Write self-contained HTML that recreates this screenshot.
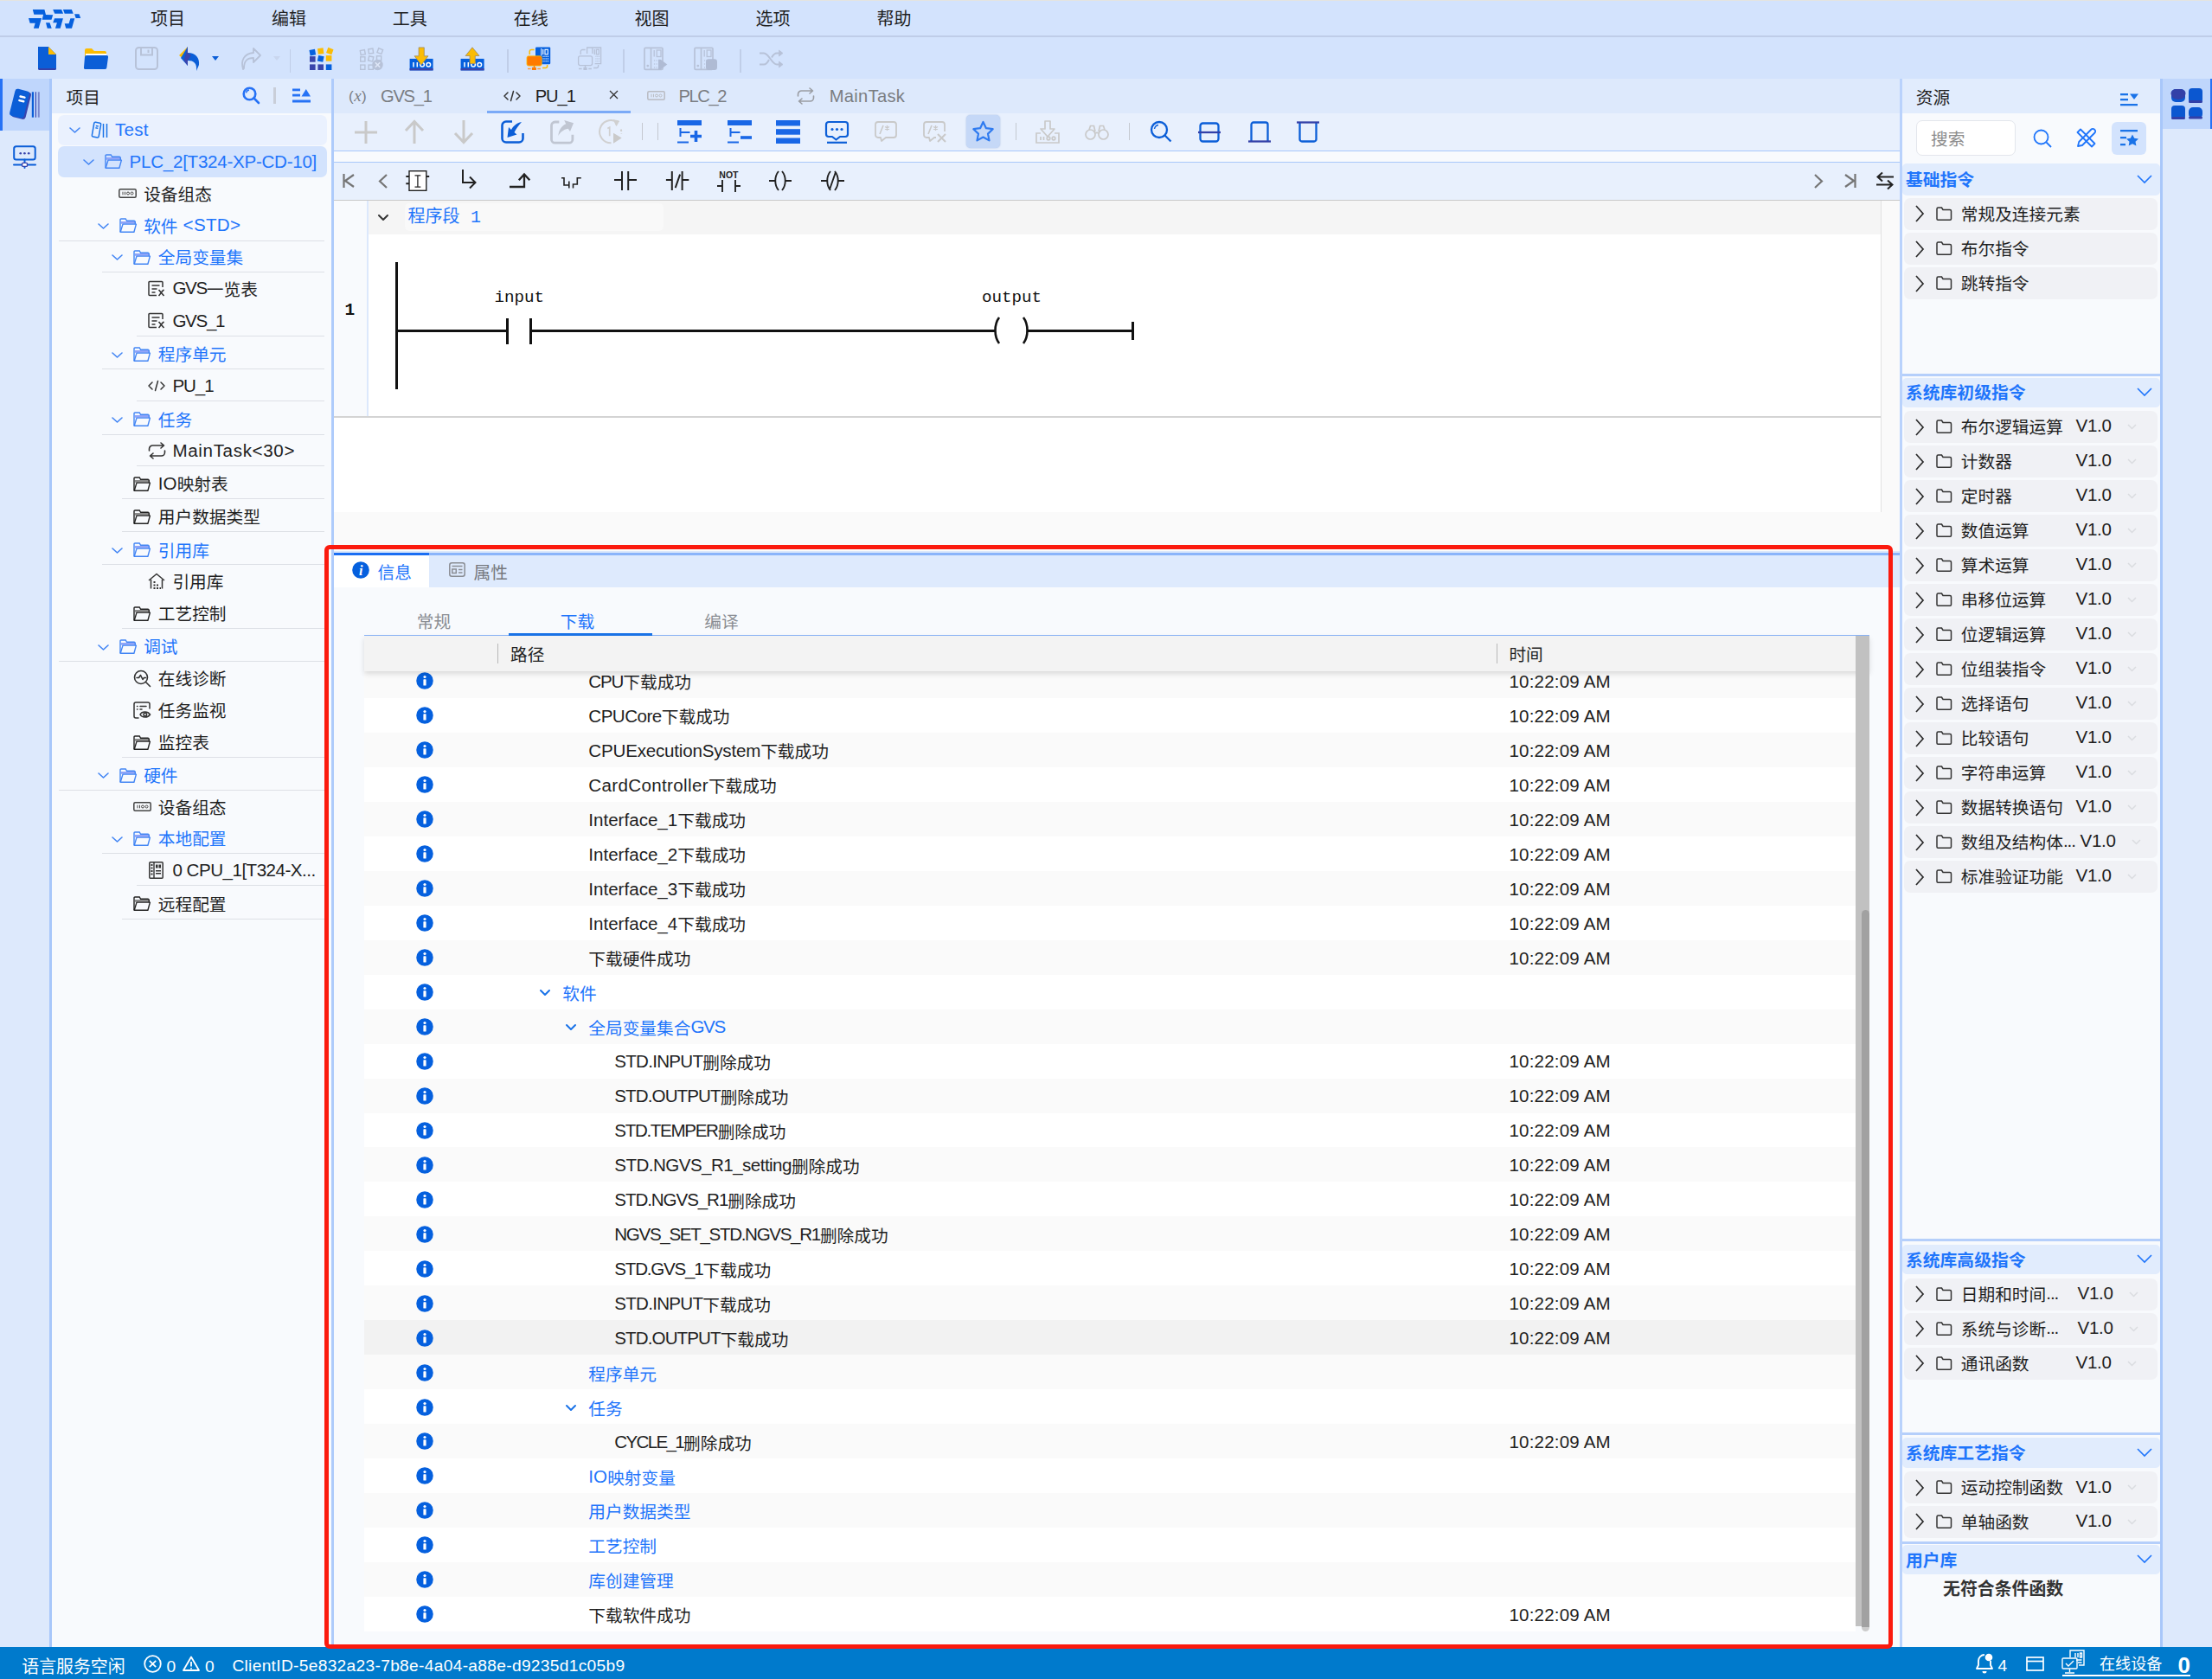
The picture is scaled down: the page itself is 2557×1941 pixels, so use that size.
<!DOCTYPE html><html lang="zh"><head><meta charset="utf-8"><title>IDE</title><style>html,body{margin:0;padding:0}body{width:2557px;height:1941px;overflow:hidden;position:relative;background:#f8fafd;font-family:"Liberation Sans","Noto Sans CJK SC",sans-serif}
body>div,body>svg{position:absolute}.t{white-space:nowrap}.l{position:relative;top:-1.6px}svg{overflow:visible}</style></head><body>
<div style="left:0px;top:0px;width:2557px;height:91px;background:#d3e3fd;"></div>
<div style="left:0px;top:41px;width:2557px;height:2px;background:#bfcde8;"></div>
<div style="left:0px;top:0px;width:2557px;height:1px;background:#e4e4e0;"></div>
<div style="left:0px;top:91px;width:57px;height:1813px;background:#dde9fc;"></div>
<div style="left:0px;top:91px;width:57px;height:59.5px;background:#bfd6fc;"></div>
<div style="left:0px;top:91px;width:3px;height:59.5px;background:#2672f5;"></div>
<div style="left:57px;top:91px;width:3px;height:1813px;background:#a8c7fa;"></div>
<div style="left:60px;top:91px;width:323px;height:1813px;background:#f8fafd;"></div>
<div style="left:60px;top:91px;width:323px;height:40px;background:#e1ecfd;"></div>
<div style="left:383px;top:91px;width:3px;height:1813px;background:#aecbfb;"></div>
<div style="left:386px;top:91px;width:1810px;height:40px;background:#dde9fc;"></div>
<div style="left:386px;top:131px;width:1810px;height:43px;background:#e8f0fd;"></div>
<div style="left:386px;top:174px;width:1810px;height:1px;background:#a8c7fa;"></div>
<div style="left:386px;top:175px;width:1810px;height:12px;background:#f8fafd;"></div>
<div style="left:386px;top:187px;width:1810px;height:1px;background:#a8c7fa;"></div>
<div style="left:386px;top:188px;width:1810px;height:43px;background:#e8f0fd;"></div>
<div style="left:386px;top:231px;width:1810px;height:1px;background:#c9c9c9;"></div>
<div style="left:386px;top:232px;width:1810px;height:406px;background:#fafafa;"></div>
<div style="left:386px;top:232px;width:1788px;height:360px;background:#fff;"></div>
<div style="left:386px;top:232px;width:38px;height:250px;background:#f8fafd;"></div>
<div style="left:424px;top:232px;width:2px;height:250px;background:#dce8fc;"></div>
<div style="left:426px;top:232px;width:1748px;height:39px;background:#f5f5f5;"></div>
<div style="left:468px;top:235px;width:299px;height:32px;background:#f9f9f9;border-radius:5px;"></div>
<div style="left:386px;top:481px;width:1788px;height:2px;background:#d4d4d4;"></div>
<div style="left:2174px;top:232px;width:1px;height:360px;background:#e2e2e2;"></div>
<div style="left:386px;top:642px;width:1810px;height:37px;background:#deeafd;"></div>
<div style="left:386px;top:637px;width:1810px;height:2px;background:#dbe8fb;"></div>
<div style="left:386px;top:639px;width:1810px;height:3px;background:#8ab4fa;"></div>
<div style="left:386px;top:642px;width:110px;height:37px;background:#fff;"></div>
<div style="left:386px;top:639px;width:110px;height:3px;background:#1b6ef3;"></div>
<div style="left:386px;top:679px;width:1810px;height:1225px;background:#f8fafd;"></div>
<div style="left:2196px;top:91px;width:3px;height:1813px;background:#b9d2fc;"></div>
<div style="left:2199px;top:91px;width:298px;height:1813px;background:#f8fafd;"></div>
<div style="left:2199px;top:91px;width:298px;height:40px;background:#e1ecfd;"></div>
<div style="left:2497px;top:91px;width:3px;height:1813px;background:#a8c7fa;"></div>
<div style="left:2500px;top:91px;width:57px;height:1813px;background:#dde9fc;"></div>
<div style="left:2500px;top:91px;width:57px;height:58px;background:#bfd6fc;"></div>
<div style="left:2555px;top:91px;width:2px;height:58px;background:#2672f5;"></div>
<div style="left:0px;top:1904px;width:2557px;height:37px;background:#007acc;"></div>
<svg style="left:0.0px;top:0.0px;" width="120" height="42" viewBox="0 0 120 42"><path d="M37.8 11.0 L51.4 11.0 L53.0 16.9 L61.2 17.2 L59.5 22.7 L48.7 22.7 L50.1 16.8 L39.3 16.8ZM33.0 21.1 L48.0 21.1 L44.7 32.8 L38.9 32.8 L40.7 26.7 L34.6 26.7ZM53.0 26.2 L57.5 26.2 L59.7 32.8 L54.7 32.8ZM61.2 11.1 L71.1 11.1 L73.1 15.7 L63.2 15.7ZM63.0 21.3 L72.9 21.3 L69.7 32.8 L63.9 32.8 L65.9 26.2 L61.2 26.2ZM72.9 11.1 L82.9 11.1 L84.7 15.7 L74.7 15.7ZM81.4 21.3 L86.3 21.3 L83.0 32.8 L76.2 32.8 L74.7 27.2 L79.6 27.2ZM86.1 16.2 L91.5 16.2 L93.2 20.9 L87.7 20.9Z" fill="#0560de"/></svg>
<div class="t" style="left:-206.0px;width:800px;text-align:center;top:6.5px;line-height:30px;font-size:20px;color:#1f1f1f;">项目</div>
<div class="t" style="left:-66.10000000000002px;width:800px;text-align:center;top:6.5px;line-height:30px;font-size:20px;color:#1f1f1f;">编辑</div>
<div class="t" style="left:73.80000000000001px;width:800px;text-align:center;top:6.5px;line-height:30px;font-size:20px;color:#1f1f1f;">工具</div>
<div class="t" style="left:213.70000000000005px;width:800px;text-align:center;top:6.5px;line-height:30px;font-size:20px;color:#1f1f1f;">在线</div>
<div class="t" style="left:353.6px;width:800px;text-align:center;top:6.5px;line-height:30px;font-size:20px;color:#1f1f1f;">视图</div>
<div class="t" style="left:493.5px;width:800px;text-align:center;top:6.5px;line-height:30px;font-size:20px;color:#1f1f1f;">选项</div>
<div class="t" style="left:633.4000000000001px;width:800px;text-align:center;top:6.5px;line-height:30px;font-size:20px;color:#1f1f1f;">帮助</div>
<svg style="left:42.5px;top:54.0px;" width="22" height="27" viewBox="0 0 22 27"><path d="M1 0H13L22 9V25a2 2 0 0 1-2 2H3a2 2 0 0 1-2-2Z" fill="#0b5ed7"/><path d="M13 0L22 9H13Z" fill="#fbbc04"/><path d="M1 25h21v0a2 2 0 0 1-2 2H3a2 2 0 0 1-2-2Z" fill="#3340a8"/></svg>
<svg style="left:97.4px;top:56.0px;" width="28" height="24" viewBox="0 0 28 24"><path d="M1 2a2 2 0 0 1 2-2h6l3 3h12a2 2 0 0 1 2 2v6H1Z" fill="#fbbc04"/><path d="M2 6h24v3H2Z" fill="#fff"/><path d="M3 8h23a2 2 0 0 1 2 2.3l-1.6 11.7a2 2 0 0 1-2 2H2a2 2 0 0 1-2-2.3L1 10a2 2 0 0 1 2-2Z" fill="#0b5ed7"/></svg>
<svg style="left:156.0px;top:54.0px;" width="27" height="27" viewBox="0 0 27 27"><rect x="1" y="1" width="25" height="25" rx="3.5" fill="none" stroke="#b7c2d8" stroke-width="2"/><path d="M7 1v8.5h13V1" fill="none" stroke="#b7c2d8" stroke-width="2"/><path d="M15.5 3.5v3.5" stroke="#b7c2d8" stroke-width="2"/></svg>
<svg style="left:206.0px;top:53.5px;" width="26" height="28" viewBox="0 0 26 28"><path d="M11 0L1 10l6 5Z" fill="#fbbc04"/><path d="M11 0v7c9 0 14 6 13 14l-3 7c1-9-3-12-10-12v6L3 13Z" fill="#0b5ed7"/><path d="M11 0v7l4 3-4 6v6L6.5 16Z" fill="#3945ad"/></svg>
<svg style="left:245.4px;top:65.0px;" width="8" height="5" viewBox="0 0 8 5"><path d="M0 0h8L4 5Z" fill="#0b5ed7"/></svg>
<svg style="left:278.0px;top:55.0px;" width="24" height="26" viewBox="0 0 24 26"><path d="M15 1l8 8-8 8v-5c-7 0-11 3-11 12l-1 1c-3-10 1-18 12-19Z" fill="none" stroke="#b7c2d8" stroke-width="1.8" stroke-linejoin="round"/></svg>
<svg style="left:316.0px;top:65.0px;" width="8" height="5" viewBox="0 0 8 5"><path d="M0 0h8L4 5Z" fill="#c9d6ee"/></svg>
<div style="left:334.5px;top:57px;width:1.5px;height:27px;background:#c0cee8;"></div>
<svg style="left:358.0px;top:54.0px;" width="27" height="27" viewBox="0 0 27 27"><rect x="0.0" y="3.3" width="6.6" height="6.6" fill="#0560de" transform="rotate(-10 3.3 6.6)"/><rect x="9.4" y="1.8" width="6.6" height="6.6" fill="#fbbc04" transform="rotate(-8 12.7 5.1)"/><rect x="20.0" y="1.8" width="6.6" height="6.6" fill="#fbbc04" transform="rotate(20 23.3 5.1)"/><rect x="0.0" y="11.1" width="6.6" height="6.6" fill="#3944ab" transform="rotate(0 3.3 14.4)"/><rect x="9.4" y="10.6" width="6.6" height="6.6" fill="#0560de" transform="rotate(12 12.7 13.9)"/><rect x="18.8" y="10.1" width="6.6" height="6.6" fill="#fbbc04" transform="rotate(0 22.1 13.4)"/><rect x="0.0" y="20.4" width="6.6" height="6.6" fill="#3944ab" transform="rotate(0 3.3 23.7)"/><rect x="9.4" y="20.4" width="6.6" height="6.6" fill="#3944ab" transform="rotate(0 12.7 23.7)"/><rect x="18.8" y="20.4" width="6.6" height="6.6" fill="#0560de" transform="rotate(0 22.1 23.7)"/></svg>
<svg style="left:416.0px;top:54.0px;" width="27" height="27" viewBox="0 0 27 27"><rect x="0.7" y="4.0" width="5.2" height="5.2" fill="none" stroke="#b7c2d8" stroke-width="1.4" transform="rotate(-10 3.3 6.6)"/><rect x="10.1" y="2.5" width="5.2" height="5.2" fill="none" stroke="#b7c2d8" stroke-width="1.4" transform="rotate(-8 12.7 5.1)"/><rect x="20.7" y="2.5" width="5.2" height="5.2" fill="none" stroke="#b7c2d8" stroke-width="1.4" transform="rotate(20 23.3 5.1)"/><rect x="0.7" y="11.8" width="5.2" height="5.2" fill="none" stroke="#b7c2d8" stroke-width="1.4" transform="rotate(0 3.3 14.4)"/><rect x="10.1" y="11.3" width="5.2" height="5.2" fill="none" stroke="#b7c2d8" stroke-width="1.4" transform="rotate(12 12.7 13.9)"/><rect x="19.5" y="10.8" width="5.2" height="5.2" fill="none" stroke="#b7c2d8" stroke-width="1.4" transform="rotate(0 22.1 13.4)"/><rect x="0.7" y="21.1" width="5.2" height="5.2" fill="none" stroke="#b7c2d8" stroke-width="1.4" transform="rotate(0 3.3 23.7)"/><rect x="10.1" y="21.1" width="5.2" height="5.2" fill="none" stroke="#b7c2d8" stroke-width="1.4" transform="rotate(0 12.7 23.7)"/><circle cx="20.5" cy="21" r="6.2" fill="#b7c2d8"/><path d="M17.8 18.300l5.400 5.400m0-5.400l-5.400 5.400" stroke="#dfe8f8" stroke-width="1.6"/></svg>
<svg style="left:473.4px;top:53.5px;" width="28" height="28" viewBox="0 0 28 28"><rect x=".6" y="13.900" width="27" height="13.500" fill="#0560de"/><rect x=".6" y="25" width="27" height="2.400" fill="#3944ab"/><g fill="none" stroke="#fff" stroke-width="1.500"><path d="M5 18v5.500M9.300 18v5.500"/><circle cx="15.100" cy="20.750" r="2.300"/><circle cx="22.300" cy="20.750" r="2.300"/></g><path d="M11.100.9h6.200v9.900h4.700L14 20.900 6.100 10.800h5Z" fill="#fbbc04" stroke="#a08a5c" stroke-width=".8"/></svg>
<svg style="left:531.5px;top:53.5px;" width="28" height="28" viewBox="0 0 28 28"><rect x=".6" y="13.900" width="27" height="13.500" fill="#0560de"/><rect x=".6" y="25" width="27" height="2.400" fill="#3944ab"/><g fill="none" stroke="#fff" stroke-width="1.500"><path d="M5 18v5.500M9.300 18v5.500"/><circle cx="15.100" cy="20.750" r="2.300"/><circle cx="22.300" cy="20.750" r="2.300"/></g><path d="M11.100 19.500h6.200V10.500h4.700L14 .8 6.100 10.500h5Z" fill="#fbbc04" stroke="#a08a5c" stroke-width=".8"/></svg>
<div style="left:586px;top:57px;width:1.5px;height:27px;background:#c0cee8;"></div>
<svg style="left:608.0px;top:53.5px;" width="28" height="28" viewBox="0 0 28 28"><rect x="11" y=".4" width="17.200" height="19.900" rx="1.200" fill="#0560de"/><g stroke="#fff" fill="none"><path d="M17.800 2v8.500" stroke-width="1"/><path d="M19.800 3.100v5.900" stroke-width="1.100"/><rect x="22" y="3.300" width="3.300" height="5.500" stroke-width="1.100"/></g><g fill="#fff"><rect x="19.5" y="10.7" width="1.100" height="1.100"/><rect x="21.4" y="10.7" width="1.100" height="1.100"/><rect x="23.2" y="10.7" width="1.100" height="1.100"/><rect x="25.0" y="10.7" width="1.100" height="1.100"/><rect x="19.5" y="13.4" width="1.100" height="1.100"/><rect x="21.4" y="13.4" width="1.100" height="1.100"/><rect x="23.2" y="13.4" width="1.100" height="1.100"/><rect x="25.0" y="13.4" width="1.100" height="1.100"/><rect x="19.5" y="16.2" width="1.100" height="1.100"/><rect x="21.4" y="16.2" width="1.100" height="1.100"/><rect x="23.2" y="16.2" width="1.100" height="1.100"/><rect x="25.0" y="16.2" width="1.100" height="1.100"/></g><g fill="none" stroke="#fbbc04" stroke-width="1.500"><path d="M9.600 3.500H6.200a2 2 0 0 0-2 2V9"/><path d="M24.600 21v1.500a2 2 0 0 1-2 2H19.100"/></g><rect x="1" y="10.800" width="17.200" height="11.300" rx="2" fill="#ff7a00" stroke="#fbbc04" stroke-width=".8"/><path d="M9.500 22v2" stroke="#ff7a00" stroke-width="1.400"/><rect x="6.900" y="23.900" width="5" height="3.100" fill="#ff7a00"/><path d="M2 25.500h3.600M13.300 25.500h3.600" stroke="#ff9a3c" stroke-width="1.300"/></svg>
<svg style="left:666.5px;top:53.5px;" width="28" height="28" viewBox="0 0 28 28"><g fill="none" stroke="#b7c2d8" stroke-width="1.300"><path d="M11.600 8V1h16v18.700h-7"/><path d="M17.800 1.500v6.500M20.300 3.100v5.900"/><rect x="22.400" y="3.300" width="2.900" height="5.500"/><path d="M9.600 3.500H6.200a2 2 0 0 0-2 2V9M24.600 21v1.500a2 2 0 0 1-2 2H19.100"/><rect x="1.600" y="10.800" width="16" height="10.800" rx="2" fill="#d3e3fd"/><path d="M9.500 22v2"/></g><g fill="#b7c2d8"><rect x="21.4" y="10.7" width="1.100" height="1.100"/><rect x="23.2" y="10.7" width="1.100" height="1.100"/><rect x="25.0" y="10.7" width="1.100" height="1.100"/><rect x="21.4" y="13.4" width="1.100" height="1.100"/><rect x="23.2" y="13.4" width="1.100" height="1.100"/><rect x="25.0" y="13.4" width="1.100" height="1.100"/><rect x="21.4" y="16.2" width="1.100" height="1.100"/><rect x="23.2" y="16.2" width="1.100" height="1.100"/><rect x="25.0" y="16.2" width="1.100" height="1.100"/><rect x="7.400" y="23.900" width="4.200" height="3.100"/></g><path d="M2 25.500h3.600M13.300 25.500h3.600" stroke="#b7c2d8" stroke-width="1.300"/></svg>
<div style="left:720px;top:57px;width:1.5px;height:27px;background:#c0cee8;"></div>
<svg style="left:744.0px;top:53.5px;" width="28" height="28" viewBox="0 0 28 28"><g fill="none" stroke="#b7c2d8" stroke-width="1.700"><rect x="1" y="1.400" width="21" height="25" rx="1.200"/><path d="M8.500 1.400v25"/><path d="M12.200 4v7.500" stroke-width="1.300"/><rect x="15.200" y="4" width="4.800" height="7.500" stroke-width="1.300"/></g><g fill="#b7c2d8"><circle cx="4.800" cy="22.100" r="1.400"/><rect x="11.9" y="15.4" width="1.200" height="1.200"/><rect x="14.4" y="15.4" width="1.200" height="1.200"/><rect x="16.9" y="15.4" width="1.200" height="1.200"/><rect x="19.4" y="15.4" width="1.200" height="1.200"/><rect x="11.9" y="19.4" width="1.200" height="1.200"/><rect x="14.4" y="19.4" width="1.200" height="1.200"/><rect x="16.9" y="19.4" width="1.200" height="1.200"/><rect x="19.4" y="19.4" width="1.200" height="1.200"/><rect x="11.9" y="23.4" width="1.200" height="1.200"/><rect x="14.4" y="23.4" width="1.200" height="1.200"/><rect x="16.9" y="23.4" width="1.200" height="1.200"/><rect x="19.4" y="23.4" width="1.200" height="1.200"/></g><path d="M17 14.800h2.500l7.800 5.800-7.800 5.900H17Z" fill="#afbbd4"/></svg>
<svg style="left:802.0px;top:53.5px;" width="28" height="28" viewBox="0 0 28 28"><g fill="none" stroke="#b7c2d8" stroke-width="1.700"><rect x="1" y="1.400" width="21" height="25" rx="1.200"/><path d="M8.500 1.400v25"/><path d="M12.200 4v7.500" stroke-width="1.300"/><rect x="15.200" y="4" width="4.800" height="7.500" stroke-width="1.300"/></g><g fill="#b7c2d8"><circle cx="4.800" cy="22.100" r="1.400"/><rect x="11.9" y="15.4" width="1.200" height="1.200"/><rect x="14.4" y="15.4" width="1.200" height="1.200"/><rect x="16.9" y="15.4" width="1.200" height="1.200"/><rect x="19.4" y="15.4" width="1.200" height="1.200"/><rect x="11.9" y="19.4" width="1.200" height="1.200"/><rect x="14.4" y="19.4" width="1.200" height="1.200"/><rect x="16.9" y="19.4" width="1.200" height="1.200"/><rect x="19.4" y="19.4" width="1.200" height="1.200"/><rect x="11.9" y="23.4" width="1.200" height="1.200"/><rect x="14.4" y="23.4" width="1.200" height="1.200"/><rect x="16.9" y="23.4" width="1.200" height="1.200"/><rect x="19.4" y="23.4" width="1.200" height="1.200"/></g><rect x="14" y="14.200" width="13" height="12.800" rx="3" fill="#afbbd4"/></svg>
<div style="left:855px;top:57px;width:1.5px;height:27px;background:#c0cee8;"></div>
<svg style="left:877.7px;top:57.5px;" width="27" height="20" viewBox="0 0 27 20"><g fill="none" stroke="#b7c2d8" stroke-width="2"><path d="M0 3.500h5c6 0 9 13 15 13h4"/><path d="M0 16.500h5c2.500 0 4.500-2.500 6-5.500M14 8.500c1.700-3 3.500-5 6-5h4"/></g><path d="M22.500 0l4.500 3.500-4.500 3.500ZM22.500 13l4.500 3.500-4.500 3.500Z" fill="#b7c2d8" stroke="#b7c2d8" stroke-width=".8"/></svg>
<svg style="left:0.0px;top:91.0px;" width="57" height="60" viewBox="0 0 57 60"><g transform="rotate(14 22.750 28.900)"><rect x="16.200" y="13.500" width="17" height="32" rx="3.200" fill="#3945ad"/><rect x="14" y="12.700" width="17" height="32" rx="3.200" fill="#0b5ed7"/><path d="M21.500 20.500h5M21.500 25.300h5" stroke="#fff" stroke-width="2.500" stroke-linecap="round"/></g><path d="M37.900 15.300v29.400" stroke="#0b5ed7" stroke-width="2.200"/><path d="M41.400 15.300v29.400" stroke="#3945ad" stroke-width="1.200"/><path d="M44.800 15.300v29.400" stroke="#7a88cf" stroke-width="2"/></svg>
<svg style="left:14.0px;top:167.0px;" width="30" height="30" viewBox="0 0 30 30"><g fill="none" stroke="#0b5ed7" stroke-width="2"><rect x="2.200" y="2.200" width="24.500" height="15.200" rx="2.500"/><path d="M14.500 17.400v9.500" stroke-linecap="round"/><path d="M2 23.400h25" stroke-linecap="round"/></g><g fill="#3945ad"><circle cx="9.750" cy="10.300" r="1.300"/><circle cx="14.400" cy="10.300" r="1.300"/><circle cx="19.200" cy="10.300" r="1.300"/></g><rect x="11.600" y="21.400" width="5.900" height="4" rx="1" fill="#fff" stroke="#3945ad" stroke-width="1.400"/></svg>
<div class="t" style="left:76.5px;top:97.7px;line-height:30px;font-size:19.7px;color:#1f1f1f;">项目</div>
<svg style="left:280.0px;top:99.5px;" width="21" height="21" viewBox="0 0 21 21"><g fill="none" stroke="#2672f5" stroke-width="2.600"><circle cx="8.500" cy="8.500" r="6.800"/><path d="M13.500 13.500l5.500 5.500" stroke-linecap="round"/></g><path d="M4.500 7.500a4 4 0 0 1 3.500-3.500" fill="none" stroke="#2672f5" stroke-width="1.3"/></svg>
<div style="left:316px;top:101px;width:3px;height:19px;background:#c9ced8;"></div>
<svg style="left:337.5px;top:102.0px;" width="21" height="17" viewBox="0 0 21 17"><g fill="#2672f5"><rect x="0" y="0.500" width="9" height="2.800"/><rect x="0" y="6.700" width="9" height="2.800"/><rect x="0" y="13.500" width="21" height="3"/><path d="M10.500 9.500L15.800 1 21 9.500Z"/></g></svg>
<div style="left:67px;top:133px;width:311px;height:34.7px;background:#eaf1fe;border-radius:7px;"></div>
<svg style="left:79.5px;top:147.4px;" width="13" height="7" viewBox="0 0 13 7"><path d="M1 1L6.5 6 12 1" fill="none" stroke="#4285f4" stroke-width="1.6" stroke-linecap="round" stroke-linejoin="round"/></svg>
<svg style="left:105.0px;top:140.4px;" width="20" height="20" viewBox="0 0 20 20"><g fill="none" stroke="#1a73e8" stroke-width="1.5"><g transform="rotate(10 6 10)"><rect x="2.500" y="1.500" width="8" height="17" rx="1.500"/><path d="M5 5.500h3M5 8h3"/></g><path d="M14.500 3v16M18.500 3v16"/></g></svg>
<div class="t" style="left:133.0px;top:136.6px;line-height:30px;font-size:19.7px;color:#1f75fb;"><span class="l" style="font-size:20.59px;letter-spacing:0.27px">Test</span></div>
<div style="left:67px;top:169px;width:311px;height:36.2px;background:#d3e3fd;border-radius:7px;"></div>
<svg style="left:96.1px;top:184.0px;" width="13" height="7" viewBox="0 0 13 7"><path d="M1 1L6.5 6 12 1" fill="none" stroke="#4285f4" stroke-width="1.6" stroke-linecap="round" stroke-linejoin="round"/></svg>
<svg style="left:120.9px;top:178.4px;" width="21" height="18" viewBox="0 0 21 18"><rect x="1.800" y="4" width="16.400" height="2.800" fill="#8fa4f8"/><path d="M1 16.200V2a1 1 0 0 1 1-1H7.200l1.400 2.300H17a1.300 1.300 0 0 1 1.300 1.300V7" fill="none" stroke="#4285f4" stroke-width="1.400"/><path d="M4 7.100H19.400L16.900 16.200H1.200Z" fill="none" stroke="#4285f4" stroke-width="1.400" stroke-linejoin="round"/></svg>
<div class="t" style="left:149.6px;top:173.2px;line-height:30px;font-size:19.7px;color:#1f75fb;"><span class="l" style="font-size:20.59px;letter-spacing:-0.27px">PLC_2[T324-XP-CD-10]</span></div>
<svg style="left:137.4px;top:218.0px;" width="21" height="11" viewBox="0 0 21 11"><rect x=".8" y=".8" width="19.400" height="9.400" rx="1.500" fill="none" stroke="#444" stroke-width="1.5"/><g fill="none" stroke="#444" stroke-width="1"><path d="M5 3.700v3.600M7.500 3.700v3.600"/><circle cx="11" cy="5.500" r="1.500"/><circle cx="15.500" cy="5.500" r="1.500"/></g></svg>
<div class="t" style="left:166.2px;top:210.0px;line-height:30px;font-size:19.7px;color:#1f1f1f;">设备组态</div>
<svg style="left:112.7px;top:258.0px;" width="13" height="7" viewBox="0 0 13 7"><path d="M1 1L6.5 6 12 1" fill="none" stroke="#4285f4" stroke-width="1.6" stroke-linecap="round" stroke-linejoin="round"/></svg>
<svg style="left:137.5px;top:252.4px;" width="21" height="18" viewBox="0 0 21 18"><rect x="1.800" y="4" width="16.400" height="2.800" fill="#8fa4f8"/><path d="M1 16.200V2a1 1 0 0 1 1-1H7.200l1.400 2.300H17a1.300 1.300 0 0 1 1.300 1.300V7" fill="none" stroke="#4285f4" stroke-width="1.400"/><path d="M4 7.100H19.400L16.900 16.200H1.200Z" fill="none" stroke="#4285f4" stroke-width="1.400" stroke-linejoin="round"/></svg>
<div class="t" style="left:166.2px;top:246.5px;line-height:30px;font-size:19.7px;color:#1f75fb;">软件<span class="l" style="font-size:20.59px;letter-spacing:0.32px"> &lt;STD&gt;</span></div>
<div style="left:68px;top:278px;width:307px;height:1px;background:#dde0e6;"></div>
<svg style="left:129.3px;top:294.3px;" width="13" height="7" viewBox="0 0 13 7"><path d="M1 1L6.5 6 12 1" fill="none" stroke="#4285f4" stroke-width="1.6" stroke-linecap="round" stroke-linejoin="round"/></svg>
<svg style="left:154.1px;top:288.7px;" width="21" height="18" viewBox="0 0 21 18"><rect x="1.800" y="4" width="16.400" height="2.800" fill="#8fa4f8"/><path d="M1 16.200V2a1 1 0 0 1 1-1H7.200l1.400 2.300H17a1.300 1.300 0 0 1 1.300 1.300V7" fill="none" stroke="#4285f4" stroke-width="1.400"/><path d="M4 7.100H19.400L16.900 16.200H1.200Z" fill="none" stroke="#4285f4" stroke-width="1.400" stroke-linejoin="round"/></svg>
<div class="t" style="left:182.8px;top:282.8px;line-height:30px;font-size:19.7px;color:#1f75fb;">全局变量集</div>
<div style="left:118px;top:314px;width:257px;height:1px;background:#dde0e6;"></div>
<svg style="left:170.6px;top:323.7px;" width="20" height="20" viewBox="0 0 20 20"><g fill="none" stroke="#333" stroke-width="1.5"><path d="M17 8V2.500a1 1 0 0 0-1-1H2a1 1 0 0 0-1 1v14a1 1 0 0 0 1 1h8"/><path d="M4.500 6h9M4.500 10h6M4.500 14h4"/><path d="M12.500 11l6 7M18.500 11c-3 2-4 5-6 7" stroke-width="1.6"/></g></svg>
<div class="t" style="left:199.4px;top:319.7px;line-height:30px;font-size:19.7px;color:#1f1f1f;"><span class="l" style="font-size:20.59px;letter-spacing:-1.36px">GVS</span>一览表</div>
<svg style="left:170.6px;top:361.1px;" width="20" height="20" viewBox="0 0 20 20"><g fill="none" stroke="#333" stroke-width="1.5"><path d="M17 8V2.500a1 1 0 0 0-1-1H2a1 1 0 0 0-1 1v14a1 1 0 0 0 1 1h8"/><path d="M4.500 6h9M4.500 10h6M4.500 14h4"/><path d="M12.500 11l6 7M18.500 11c-3 2-4 5-6 7" stroke-width="1.6"/></g></svg>
<div class="t" style="left:199.4px;top:357.8px;line-height:30px;font-size:19.7px;color:#1f1f1f;"><span class="l" style="font-size:20.59px;letter-spacing:-1.30px">GVS_1</span></div>
<div style="left:158px;top:388px;width:217px;height:1px;background:#dde0e6;"></div>
<svg style="left:129.3px;top:406.7px;" width="13" height="7" viewBox="0 0 13 7"><path d="M1 1L6.5 6 12 1" fill="none" stroke="#4285f4" stroke-width="1.6" stroke-linecap="round" stroke-linejoin="round"/></svg>
<svg style="left:154.1px;top:401.1px;" width="21" height="18" viewBox="0 0 21 18"><rect x="1.800" y="4" width="16.400" height="2.800" fill="#8fa4f8"/><path d="M1 16.200V2a1 1 0 0 1 1-1H7.200l1.400 2.300H17a1.300 1.300 0 0 1 1.300 1.300V7" fill="none" stroke="#4285f4" stroke-width="1.400"/><path d="M4 7.100H19.400L16.900 16.200H1.200Z" fill="none" stroke="#4285f4" stroke-width="1.400" stroke-linejoin="round"/></svg>
<div class="t" style="left:182.8px;top:395.2px;line-height:30px;font-size:19.7px;color:#1f75fb;">程序单元</div>
<div style="left:118px;top:426px;width:257px;height:1px;background:#dde0e6;"></div>
<svg style="left:170.6px;top:439.1px;" width="20" height="14" viewBox="0 0 20 14"><g fill="none" stroke="#333" stroke-width="1.5" stroke-linecap="round" stroke-linejoin="round"><path d="M5 3L1 7l4 4M15 3l4 4-4 4M11.500 1.500L8.500 12.500"/></g></svg>
<div class="t" style="left:199.4px;top:432.8px;line-height:30px;font-size:19.7px;color:#1f1f1f;"><span class="l" style="font-size:20.59px;letter-spacing:-1.07px">PU_1</span></div>
<div style="left:158px;top:463px;width:217px;height:1px;background:#dde0e6;"></div>
<svg style="left:129.3px;top:482.0px;" width="13" height="7" viewBox="0 0 13 7"><path d="M1 1L6.5 6 12 1" fill="none" stroke="#4285f4" stroke-width="1.6" stroke-linecap="round" stroke-linejoin="round"/></svg>
<svg style="left:154.1px;top:476.4px;" width="21" height="18" viewBox="0 0 21 18"><rect x="1.800" y="4" width="16.400" height="2.800" fill="#8fa4f8"/><path d="M1 16.200V2a1 1 0 0 1 1-1H7.200l1.400 2.300H17a1.300 1.300 0 0 1 1.300 1.300V7" fill="none" stroke="#4285f4" stroke-width="1.400"/><path d="M4 7.100H19.400L16.900 16.200H1.200Z" fill="none" stroke="#4285f4" stroke-width="1.400" stroke-linejoin="round"/></svg>
<div class="t" style="left:182.8px;top:470.5px;line-height:30px;font-size:19.7px;color:#1f75fb;">任务</div>
<div style="left:118px;top:502px;width:257px;height:1px;background:#dde0e6;"></div>
<svg style="left:170.6px;top:511.0px;" width="21" height="20" viewBox="0 0 21 20"><g fill="none" stroke="#333" stroke-width="1.6" stroke-linecap="round" stroke-linejoin="round"><path d="M1.500 10V8a4 4 0 0 1 4-4H18M15 1l3.500 3L15 7"/><path d="M19.500 10v2a4 4 0 0 1-4 4H3M6 13l-3.500 3L6 19"/></g></svg>
<div class="t" style="left:199.4px;top:507.6px;line-height:30px;font-size:19.7px;color:#1f1f1f;"><span class="l" style="font-size:20.59px;letter-spacing:0.66px">MainTask&lt;30&gt;</span></div>
<div style="left:158px;top:538px;width:217px;height:1px;background:#dde0e6;"></div>
<svg style="left:154.1px;top:551.1px;" width="21" height="18" viewBox="0 0 21 18"><rect x="1.800" y="4" width="16.400" height="2.800" fill="#8c8c8c"/><path d="M1 16.200V2a1 1 0 0 1 1-1H7.200l1.400 2.300H17a1.300 1.300 0 0 1 1.300 1.300V7" fill="none" stroke="#222" stroke-width="1.400"/><path d="M4 7.100H19.400L16.900 16.200H1.200Z" fill="none" stroke="#222" stroke-width="1.400" stroke-linejoin="round"/></svg>
<div class="t" style="left:182.8px;top:545.2px;line-height:30px;font-size:19.7px;color:#1f1f1f;"><span class="l" style="font-size:20.59px;letter-spacing:0.07px">IO</span>映射表</div>
<div style="left:141px;top:576px;width:234px;height:1px;background:#dde0e6;"></div>
<svg style="left:154.1px;top:589.2px;" width="21" height="18" viewBox="0 0 21 18"><rect x="1.800" y="4" width="16.400" height="2.800" fill="#8c8c8c"/><path d="M1 16.200V2a1 1 0 0 1 1-1H7.200l1.400 2.300H17a1.300 1.300 0 0 1 1.300 1.300V7" fill="none" stroke="#222" stroke-width="1.400"/><path d="M4 7.100H19.400L16.900 16.200H1.200Z" fill="none" stroke="#222" stroke-width="1.400" stroke-linejoin="round"/></svg>
<div class="t" style="left:182.8px;top:583.3px;line-height:30px;font-size:19.7px;color:#1f1f1f;">用户数据类型</div>
<div style="left:141px;top:614px;width:234px;height:1px;background:#dde0e6;"></div>
<svg style="left:129.3px;top:633.0px;" width="13" height="7" viewBox="0 0 13 7"><path d="M1 1L6.5 6 12 1" fill="none" stroke="#4285f4" stroke-width="1.6" stroke-linecap="round" stroke-linejoin="round"/></svg>
<svg style="left:154.1px;top:627.4px;" width="21" height="18" viewBox="0 0 21 18"><rect x="1.800" y="4" width="16.400" height="2.800" fill="#8fa4f8"/><path d="M1 16.200V2a1 1 0 0 1 1-1H7.200l1.400 2.300H17a1.300 1.300 0 0 1 1.300 1.300V7" fill="none" stroke="#4285f4" stroke-width="1.400"/><path d="M4 7.100H19.400L16.900 16.200H1.200Z" fill="none" stroke="#4285f4" stroke-width="1.400" stroke-linejoin="round"/></svg>
<div class="t" style="left:182.8px;top:621.5px;line-height:30px;font-size:19.7px;color:#1f75fb;">引用库</div>
<div style="left:118px;top:652px;width:257px;height:1px;background:#dde0e6;"></div>
<svg style="left:170.6px;top:662.3px;" width="20" height="20" viewBox="0 0 20 20"><g fill="none" stroke="#333" stroke-width="1.5" stroke-linejoin="round"><path d="M1 9L10 1.500 19 9"/><path d="M3.500 8v10.500M16.500 8v10.500"/></g><g fill="#333"><rect x="6.500" y="10" width="2" height="2"/><rect x="6.500" y="13.500" width="2" height="2"/><rect x="6.500" y="17" width="2" height="2"/><rect x="10" y="13.500" width="2" height="2"/><rect x="10" y="17" width="2" height="2"/><rect x="13.500" y="17" width="1.500" height="2"/></g></svg>
<div class="t" style="left:199.4px;top:658.3px;line-height:30px;font-size:19.7px;color:#1f1f1f;">引用库</div>
<svg style="left:154.1px;top:701.0px;" width="21" height="18" viewBox="0 0 21 18"><rect x="1.800" y="4" width="16.400" height="2.800" fill="#8c8c8c"/><path d="M1 16.200V2a1 1 0 0 1 1-1H7.200l1.400 2.300H17a1.300 1.300 0 0 1 1.300 1.300V7" fill="none" stroke="#222" stroke-width="1.400"/><path d="M4 7.100H19.400L16.900 16.200H1.200Z" fill="none" stroke="#222" stroke-width="1.400" stroke-linejoin="round"/></svg>
<div class="t" style="left:182.8px;top:695.1px;line-height:30px;font-size:19.7px;color:#1f1f1f;">工艺控制</div>
<div style="left:141px;top:726px;width:234px;height:1px;background:#dde0e6;"></div>
<svg style="left:112.7px;top:744.8px;" width="13" height="7" viewBox="0 0 13 7"><path d="M1 1L6.5 6 12 1" fill="none" stroke="#4285f4" stroke-width="1.6" stroke-linecap="round" stroke-linejoin="round"/></svg>
<svg style="left:137.5px;top:739.2px;" width="21" height="18" viewBox="0 0 21 18"><rect x="1.800" y="4" width="16.400" height="2.800" fill="#8fa4f8"/><path d="M1 16.200V2a1 1 0 0 1 1-1H7.200l1.400 2.300H17a1.300 1.300 0 0 1 1.300 1.300V7" fill="none" stroke="#4285f4" stroke-width="1.400"/><path d="M4 7.100H19.400L16.900 16.200H1.200Z" fill="none" stroke="#4285f4" stroke-width="1.400" stroke-linejoin="round"/></svg>
<div class="t" style="left:166.2px;top:733.3px;line-height:30px;font-size:19.7px;color:#1f75fb;">调试</div>
<div style="left:68px;top:764px;width:307px;height:1px;background:#dde0e6;"></div>
<svg style="left:154.0px;top:774.0px;" width="21" height="21" viewBox="0 0 21 21"><g fill="none" stroke="#333" stroke-width="1.6" stroke-linecap="round" stroke-linejoin="round"><circle cx="9" cy="9" r="7.500"/><path d="M14.500 14.500l5 5"/><path d="M4 9.500h2.500l2-3 2.500 5 1.500-2h2"/></g></svg>
<div class="t" style="left:182.8px;top:770.0px;line-height:30px;font-size:19.7px;color:#1f1f1f;">在线诊断</div>
<svg style="left:154.0px;top:810.8px;" width="21" height="21" viewBox="0 0 21 21"><g fill="none" stroke="#333" stroke-width="1.5" stroke-linecap="round"><path d="M19 8V3a2 2 0 0 0-2-2H3a2 2 0 0 0-2 2v14a2 2 0 0 0 2 2h3"/><path d="M4.500 5.500h.5M8 5.500h7M4.500 9h.5M8 9h2"/><path d="M8 15c2-4 9-4 11.500 0-2.500 4-9.500 4-11.500 0Z"/><circle cx="13.800" cy="15" r="1.800"/></g></svg>
<div class="t" style="left:182.8px;top:806.8px;line-height:30px;font-size:19.7px;color:#1f1f1f;">任务监视</div>
<svg style="left:154.1px;top:849.5px;" width="21" height="18" viewBox="0 0 21 18"><rect x="1.800" y="4" width="16.400" height="2.800" fill="#8c8c8c"/><path d="M1 16.200V2a1 1 0 0 1 1-1H7.200l1.400 2.300H17a1.300 1.300 0 0 1 1.300 1.300V7" fill="none" stroke="#222" stroke-width="1.400"/><path d="M4 7.100H19.400L16.900 16.200H1.200Z" fill="none" stroke="#222" stroke-width="1.400" stroke-linejoin="round"/></svg>
<div class="t" style="left:182.8px;top:843.6px;line-height:30px;font-size:19.7px;color:#1f1f1f;">监控表</div>
<div style="left:141px;top:875px;width:234px;height:1px;background:#dde0e6;"></div>
<svg style="left:112.7px;top:893.3px;" width="13" height="7" viewBox="0 0 13 7"><path d="M1 1L6.5 6 12 1" fill="none" stroke="#4285f4" stroke-width="1.6" stroke-linecap="round" stroke-linejoin="round"/></svg>
<svg style="left:137.5px;top:887.7px;" width="21" height="18" viewBox="0 0 21 18"><rect x="1.800" y="4" width="16.400" height="2.800" fill="#8fa4f8"/><path d="M1 16.200V2a1 1 0 0 1 1-1H7.200l1.400 2.300H17a1.300 1.300 0 0 1 1.300 1.300V7" fill="none" stroke="#4285f4" stroke-width="1.400"/><path d="M4 7.100H19.400L16.900 16.200H1.200Z" fill="none" stroke="#4285f4" stroke-width="1.400" stroke-linejoin="round"/></svg>
<div class="t" style="left:166.2px;top:881.8px;line-height:30px;font-size:19.7px;color:#1f75fb;">硬件</div>
<div style="left:68px;top:913px;width:307px;height:1px;background:#dde0e6;"></div>
<svg style="left:154.0px;top:926.6px;" width="21" height="11" viewBox="0 0 21 11"><rect x=".8" y=".8" width="19.400" height="9.400" rx="1.500" fill="none" stroke="#444" stroke-width="1.5"/><g fill="none" stroke="#444" stroke-width="1"><path d="M5 3.700v3.600M7.500 3.700v3.600"/><circle cx="11" cy="5.500" r="1.500"/><circle cx="15.500" cy="5.500" r="1.500"/></g></svg>
<div class="t" style="left:182.8px;top:918.6px;line-height:30px;font-size:19.7px;color:#1f1f1f;">设备组态</div>
<svg style="left:129.3px;top:966.8px;" width="13" height="7" viewBox="0 0 13 7"><path d="M1 1L6.5 6 12 1" fill="none" stroke="#4285f4" stroke-width="1.6" stroke-linecap="round" stroke-linejoin="round"/></svg>
<svg style="left:154.1px;top:961.2px;" width="21" height="18" viewBox="0 0 21 18"><rect x="1.800" y="4" width="16.400" height="2.800" fill="#8fa4f8"/><path d="M1 16.200V2a1 1 0 0 1 1-1H7.200l1.400 2.300H17a1.300 1.300 0 0 1 1.300 1.300V7" fill="none" stroke="#4285f4" stroke-width="1.400"/><path d="M4 7.100H19.400L16.900 16.200H1.200Z" fill="none" stroke="#4285f4" stroke-width="1.400" stroke-linejoin="round"/></svg>
<div class="t" style="left:182.8px;top:955.3px;line-height:30px;font-size:19.7px;color:#1f75fb;">本地配置</div>
<div style="left:118px;top:986px;width:257px;height:1px;background:#dde0e6;"></div>
<svg style="left:171.6px;top:996.1px;" width="17" height="20" viewBox="0 0 17 20"><rect x=".8" y=".8" width="15.400" height="18.400" rx="1" fill="none" stroke="#333" stroke-width="1.5"/><path d="M6 1v18" stroke="#333" stroke-width="1.4"/><g fill="#333"><rect x="2.500" y="3" width="2" height="2"/><rect x="2.500" y="6.500" width="2" height="2"/><rect x="2.500" y="10" width="2" height="2"/><rect x="2.500" y="13.500" width="2" height="2"/><rect x="8" y="3.500" width="2.500" height="4"/><rect x="11.500" y="3.500" width="2.500" height="4"/><rect x="8" y="10" width="6" height="1.500"/><rect x="8" y="13" width="6" height="1.500"/></g></svg>
<div class="t" style="left:199.4px;top:992.8px;line-height:30px;font-size:19.7px;color:#1f1f1f;"><span class="l" style="font-size:20.59px;letter-spacing:-0.50px">0 CPU_1[T324-X...</span></div>
<div style="left:158px;top:1023px;width:217px;height:1px;background:#dde0e6;"></div>
<svg style="left:154.1px;top:1036.4px;" width="21" height="18" viewBox="0 0 21 18"><rect x="1.800" y="4" width="16.400" height="2.800" fill="#8c8c8c"/><path d="M1 16.200V2a1 1 0 0 1 1-1H7.200l1.400 2.300H17a1.300 1.300 0 0 1 1.300 1.300V7" fill="none" stroke="#222" stroke-width="1.400"/><path d="M4 7.100H19.400L16.900 16.200H1.200Z" fill="none" stroke="#222" stroke-width="1.400" stroke-linejoin="round"/></svg>
<div class="t" style="left:182.8px;top:1030.5px;line-height:30px;font-size:19.7px;color:#1f1f1f;">远程配置</div>
<div style="left:141px;top:1062px;width:234px;height:1px;background:#dde0e6;"></div>
<div class="t" style="left:403px;top:95.5px;line-height:30px;font-size:19.7px;color:#7a7d82;font-size:17px;letter-spacing:.5px;">(<i style="font-family:'Liberation Serif',serif;font-size:19px">x</i>)</div>
<div class="t" style="left:440px;top:97.6px;line-height:30px;font-size:19.7px;color:#7a7d82;"><span class="l" style="font-size:20.16px;letter-spacing:-1.28px">GVS_1</span></div>
<svg style="left:582.0px;top:104.0px;" width="20" height="14" viewBox="0 0 20 14"><g fill="none" stroke="#333" stroke-width="1.5" stroke-linecap="round" stroke-linejoin="round"><path d="M5 3L1 7l4 4M15 3l4 4-4 4M11.500 1.500L8.500 12.500"/></g></svg>
<div class="t" style="left:618.7px;top:97.6px;line-height:30px;font-size:19.7px;color:#1f1f1f;"><span class="l" style="font-size:20.16px;letter-spacing:-1.05px">PU_1</span></div>
<svg style="left:703.5px;top:103.5px;" width="11" height="11" viewBox="0 0 11 11"><path d="M1 1l9 9M10 1l-9 9" stroke="#333" stroke-width="1.3"/></svg>
<div style="left:563px;top:128px;width:166px;height:3px;background:#7baaf7;"></div>
<svg style="left:747.5px;top:104.5px;" width="21" height="11" viewBox="0 0 21 11"><rect x=".8" y=".8" width="19.400" height="9.400" rx="1.500" fill="none" stroke="#b9bcc2" stroke-width="1.5"/><g fill="none" stroke="#b9bcc2" stroke-width="1"><path d="M5 3.700v3.600M7.500 3.700v3.600"/><circle cx="11" cy="5.500" r="1.500"/><circle cx="15.500" cy="5.500" r="1.500"/></g></svg>
<div class="t" style="left:784.5px;top:97.6px;line-height:30px;font-size:19.7px;color:#7a7d82;"><span class="l" style="font-size:20.16px;letter-spacing:-1.39px">PLC_2</span></div>
<svg style="left:921.0px;top:101.0px;" width="21" height="20" viewBox="0 0 21 20"><g fill="none" stroke="#9a9da3" stroke-width="1.6" stroke-linecap="round" stroke-linejoin="round"><path d="M1.500 10V8a4 4 0 0 1 4-4H18M15 1l3.500 3L15 7"/><path d="M19.500 10v2a4 4 0 0 1-4 4H3M6 13l-3.500 3L6 19"/></g></svg>
<div class="t" style="left:958.7px;top:97.6px;line-height:30px;font-size:19.7px;color:#7a7d82;"><span class="l" style="font-size:20.16px;letter-spacing:0.30px">MainTask</span></div>
<svg style="left:409.8px;top:139.5px;" width="26" height="26" viewBox="0 0 26 26"><path d="M13 0v26M0 13h26" stroke="#c9c9c9" stroke-width="3"/></svg>
<svg style="left:468.2px;top:139.0px;" width="22" height="27" viewBox="0 0 22 27"><path d="M11 27V2M1 12L11 1.500 21 12" fill="none" stroke="#c9c9c9" stroke-width="3"/></svg>
<svg style="left:524.7px;top:139.0px;" width="22" height="27" viewBox="0 0 22 27"><path d="M11 0v25M1 15l10 10.500L21 15" fill="none" stroke="#c9c9c9" stroke-width="3"/></svg>
<svg style="left:578.9px;top:139.0px;" width="27" height="27" viewBox="0 0 27 27"><path d="M13 1.500H6a4.500 4.500 0 0 0-4.500 4.500v15a4.500 4.500 0 0 0 4.500 4.500h15a4.500 4.500 0 0 0 4.500-4.500V15" fill="none" stroke="#0b5ed7" stroke-width="2.600"/><path d="M24 2c-6 1-10 5-12 9l-3-3-1.500 12 11-3.500-3-2.500c2-4 5-8 8.500-12Z" fill="#0b5ed7"/></svg>
<svg style="left:636.0px;top:139.0px;" width="28" height="28" viewBox="0 0 28 28"><path d="M10.300 2H5.500a4 4 0 0 0-4 4v16.200a4 4 0 0 0 4 4h16.400a4 4 0 0 0 4-4V16.800" fill="none" stroke="#c0c6d2" stroke-width="2.800"/><path d="M27 3.200L16.200 0l2 4.300C12.500 7 9.800 12 9.400 18.100c2.300-4.300 5.800-7.300 11.300-8.300l2.300 3.200Z" fill="#c0c6d2"/></svg>
<svg style="left:691.0px;top:138.0px;" width="30" height="30" viewBox="0 0 30 30"><g fill="none" stroke="#d0d0d0" stroke-width="2"><path d="M15.500 27.300A13.100 13.100 0 1 1 22 3"/><path d="M26.800 11.500a13 13 0 0 1 .3 5" stroke-dasharray="2.500 2"/></g><path d="M18.500 .8l6 1.200-3 5.400Z" fill="#d0d0d0" stroke="#d0d0d0" stroke-width="1" stroke-linejoin="round"/><path d="M11.300 10.500l2.400-1.300v10" fill="none" stroke="#d0d0d0" stroke-width="1.700"/><path d="M18 15.700l9.700 5.700-9.700 6.300Z" fill="#cacaca"/></svg>
<div style="left:742px;top:142px;width:1px;height:20px;background:#c4c8d0;"></div>
<div style="left:760px;top:142px;width:1px;height:20px;background:#c4c8d0;"></div>
<svg style="left:783.4px;top:139.0px;" width="28" height="27" viewBox="0 0 28 27"><rect x="0" y="0" width="28" height="6" fill="#1967e6"/><path d="M3.500 9v10M3.500 14h11M0 25.500h13" fill="none" stroke="#1967e6" stroke-width="2"/><path d="M21.500 12v13M15 18.500h13" stroke="#1967e6" stroke-width="3.600"/></svg>
<svg style="left:840.5px;top:139.0px;" width="28" height="27" viewBox="0 0 28 27"><rect x="0" y="0" width="28" height="6" fill="#1967e6"/><path d="M3.500 9v10M3.500 14h11M0 25.500h13" fill="none" stroke="#1967e6" stroke-width="2"/><path d="M15 20h13" stroke="#1967e6" stroke-width="3.600"/></svg>
<svg style="left:896.5px;top:139.0px;" width="28" height="27" viewBox="0 0 28 27"><rect x="0" y="0" width="28" height="6.500" fill="#1967e6"/><rect x="0" y="10.200" width="28" height="6.500" fill="#1967e6"/><rect x="0" y="20.500" width="28" height="6.500" fill="#1967e6"/></svg>
<svg style="left:953.9px;top:139.5px;" width="27" height="26" viewBox="0 0 27 26"><path d="M8 18H4a3 3 0 0 1-3-3V4a3 3 0 0 1 3-3h19a3 3 0 0 1 3 3v11a3 3 0 0 1-3 3h-6l-4.500 3.500Z" fill="none" stroke="#0b5ed7" stroke-width="2.200" stroke-linejoin="round"/><g fill="#0b5ed7"><circle cx="8" cy="9.500" r="1.600"/><circle cx="13.500" cy="9.500" r="1.600"/><circle cx="19" cy="9.500" r="1.600"/></g><path d="M2 24.800h23" stroke="#0b5ed7" stroke-width="2.200"/></svg>
<svg style="left:1011.0px;top:140.0px;" width="27" height="26" viewBox="0 0 27 26"><path d="M7 19H4a3 3 0 0 1-3-3V4a3 3 0 0 1 3-3h18a3 3 0 0 1 3 3v12a3 3 0 0 1-3 3h-9l-5 4Z" fill="none" stroke="#c9c9c9" stroke-width="1.800" stroke-linejoin="round"/><path d="M10 5L6 15" stroke="#c9c9c9" stroke-width="1.600"/><path d="M14.500 5v6M12 6.500l5 3M17 6.500l-5 3" stroke="#c9c9c9" stroke-width="1.300"/></svg>
<svg style="left:1067.3px;top:140.0px;" width="27" height="26" viewBox="0 0 27 26"><path d="M7 19H4a3 3 0 0 1-3-3V4a3 3 0 0 1 3-3h18a3 3 0 0 1 3 3v12a3 3 0 0 1-3 3h-9l-5 4Z" fill="none" stroke="#c9c9c9" stroke-width="1.800" stroke-linejoin="round"/><path d="M10 5L6 15" stroke="#c9c9c9" stroke-width="1.600"/><path d="M14.500 5v6M12 6.500l5 3M17 6.500l-5 3" stroke="#c9c9c9" stroke-width="1.300"/><rect x="15" y="12" width="13" height="13" fill="#e8f0fd"/><path d="M17 15l9 9M26 15l-9 9" stroke="#c9c9c9" stroke-width="2"/></svg>
<div style="left:1117px;top:133px;width:39px;height:38px;background:#c5d8f7;border-radius:5px;box-shadow:0 0 2px #9fb8e0;"></div>
<svg style="left:1123.1px;top:139.0px;" width="27" height="26" viewBox="0 0 27 26"><path d="M13.500 2l3.400 7.200 7.800 1-5.700 5.400 1.500 7.800-7-3.900-7 3.900 1.500-7.800L2.300 10.200l7.800-1Z" fill="none" stroke="#2f7bf0" stroke-width="2.200" stroke-linejoin="round"/></svg>
<div style="left:1174px;top:142px;width:1px;height:20px;background:#c4c8d0;"></div>
<svg style="left:1197.0px;top:138.5px;" width="28" height="28" viewBox="0 0 28 28"><g fill="none" stroke="#c9c9c9" stroke-width="1.700"><path d="M11 1h6v9h5l-8 9-8-9h5Z" stroke-linejoin="round"/><path d="M6 15H1v11h26V15h-5"/><path d="M6 19v4M9.500 19v4"/><circle cx="15" cy="21" r="1.800"/><circle cx="21" cy="21" r="1.800"/></g></svg>
<svg style="left:1254.0px;top:143.5px;" width="28" height="18" viewBox="0 0 28 18"><g fill="none" stroke="#c9c9c9" stroke-width="1.700"><circle cx="6.500" cy="11.500" r="5.500"/><circle cx="21.500" cy="11.500" r="5.500"/><path d="M12 10c1.500-1 2.500-1 4 0M5 6l1.500-4.500h4L12 8M23 6l-1.500-4.500h-4L16 8"/></g></svg>
<div style="left:1305px;top:142px;width:1px;height:20px;background:#c4c8d0;"></div>
<svg style="left:1329.0px;top:139.0px;" width="26" height="26" viewBox="0 0 26 26"><g fill="none" stroke="#0b5ed7" stroke-width="2.300"><circle cx="11" cy="11" r="9"/><path d="M17.500 17.500l7 7"/></g><path d="M5.500 10a5.500 5.500 0 0 1 4.500-4.500" fill="none" stroke="#0b5ed7" stroke-width="1.400"/></svg>
<svg style="left:1385.0px;top:140.5px;" width="26" height="24" viewBox="0 0 26 24"><rect x="2.500" y="1.500" width="21" height="21" rx="3" fill="none" stroke="#0b5ed7" stroke-width="2.300"/><path d="M0 12h26" stroke="#3340a8" stroke-width="2.300"/></svg>
<svg style="left:1442.5px;top:140.0px;" width="26" height="25" viewBox="0 0 26 25"><path d="M3.500 23V4a2.500 2.500 0 0 1 2.500-2.500h14a2.500 2.500 0 0 1 2.500 2.500v19" fill="none" stroke="#0b5ed7" stroke-width="2.300"/><path d="M0 23.500h26" stroke="#3340a8" stroke-width="2.300"/></svg>
<svg style="left:1499.0px;top:140.0px;" width="26" height="25" viewBox="0 0 26 25"><path d="M3.500 2v19a2.500 2.500 0 0 0 2.500 2.500h14a2.500 2.500 0 0 0 2.500-2.500V2" fill="none" stroke="#0b5ed7" stroke-width="2.300"/><path d="M0 1.500h26" stroke="#3340a8" stroke-width="2.300"/></svg>
<svg style="left:396.0px;top:201.0px;" width="14" height="16" viewBox="0 0 14 16"><path d="M1.500 0v16M13 1L3 8l10 7" fill="none" stroke="#757575" stroke-width="2.200"/></svg>
<svg style="left:436.5px;top:200.5px;" width="11" height="17" viewBox="0 0 11 17"><path d="M10 1L2 8.500l8 7.500" fill="none" stroke="#757575" stroke-width="2.200"/></svg>
<svg style="left:469.0px;top:197.0px;" width="28" height="24" viewBox="0 0 28 24"><rect x="4" y=".7" width="19.800" height="22.600" fill="#fff" stroke="#222" stroke-width="1.400"/><path d="M.3 7h3.700M.3 15.200h3.700M23.800 7h3.400" stroke="#222" stroke-width="2"/><path d="M10.500 5.800h6.800M10.500 19.200h6.800M13.900 5.800v13.400" stroke="#222" stroke-width="1.300"/></svg>
<svg style="left:533.0px;top:196.0px;" width="18" height="22" viewBox="0 0 18 22"><path d="M2 0v15h14M10 8.500L16.500 15 10 21.500" fill="none" stroke="#222" stroke-width="2"/></svg>
<svg style="left:589.0px;top:200.0px;" width="25" height="18" viewBox="0 0 25 18"><path d="M0 16h17V2M10.800 8.300L17 1.500l6.300 6.800" fill="none" stroke="#222" stroke-width="2.300"/></svg>
<svg style="left:649.3px;top:204.5px;" width="24" height="13" viewBox="0 0 24 13"><path d="M0 .8h3v8.200h6M8.800 4.500v8M13.500 12.500v-4.500h4.800v-7.200h4.500" fill="none" stroke="#222" stroke-width="1.600"/></svg>
<svg style="left:709.5px;top:198.0px;" width="27" height="23" viewBox="0 0 27 23"><path d="M0 10h9M16.200 10h9.800M9 0v22M16.200 0v22" fill="none" stroke="#222" stroke-width="2"/></svg>
<svg style="left:768.5px;top:198.0px;" width="28" height="23" viewBox="0 0 28 23"><path d="M.9 10h7M19.600 10h7.700M7.800 0v22M19.600 0v22M17.100 3.600l-5.400 15.600" fill="none" stroke="#222" stroke-width="2"/></svg>
<svg style="left:829.1px;top:208.0px;" width="27" height="14" viewBox="0 0 27 14"><path d="M0 7h6M21 7h6M6 0v14M21 0v14" fill="none" stroke="#222" stroke-width="1.900"/></svg>
<div class="t" style="left:442.4px;width:800px;text-align:center;top:196.3px;line-height:12px;font-size:19.7px;color:#222;font-size:10.500px;font-weight:700;letter-spacing:0px;">NOT</div>
<svg style="left:889.0px;top:197.0px;" width="26" height="24" viewBox="0 0 26 24"><path d="M0 12h7M19 12h7" stroke="#222" stroke-width="1.900"/><path d="M11 1c-5 6-5 16 0 22M15 1c5 6 5 16 0 22" fill="none" stroke="#222" stroke-width="1.900"/></svg>
<svg style="left:948.5px;top:197.0px;" width="27" height="24" viewBox="0 0 27 24"><path d="M0 12h7M20 12h7M17 2l-7 20" stroke="#222" stroke-width="1.900"/><path d="M11 1c-5 6-5 16 0 22M16 1c5 6 5 16 0 22" fill="none" stroke="#222" stroke-width="1.900"/></svg>
<svg style="left:2096.5px;top:200.5px;" width="11" height="17" viewBox="0 0 11 17"><path d="M1 1l8 7.500L1 16" fill="none" stroke="#757575" stroke-width="2.200"/></svg>
<svg style="left:2132.0px;top:201.0px;" width="14" height="16" viewBox="0 0 14 16"><path d="M12.500 0v16M1 1l10 7L1 15" fill="none" stroke="#757575" stroke-width="2.200"/></svg>
<svg style="left:2168.5px;top:199.0px;" width="20" height="20" viewBox="0 0 20 20"><path d="M20 5.500H2M7 .5L1.500 5.500 7 10.500M0 14.500h18M13 9.500l5.500 5L13 19.500" fill="none" stroke="#222" stroke-width="2"/></svg>
<svg style="left:437.0px;top:247.5px;" width="12" height="7" viewBox="0 0 12 7"><path d="M1 1L6.0 6 11 1" fill="none" stroke="#333" stroke-width="2" stroke-linecap="round" stroke-linejoin="round"/></svg>
<div class="t" style="left:471.5px;top:235.0px;line-height:30px;font-size:20px;color:#1f75fb;">程序段 <span style="font-family:'Liberation Mono',monospace;font-size:20px;margin-left:7px">1</span></div>
<div class="t" style="left:398.5px;top:347.0px;line-height:24px;font-size:19.7px;color:#111;font-family:'Liberation Mono',monospace;font-weight:700;font-size:19.500px;">1</div>
<div style="left:457px;top:303px;width:3px;height:147px;background:#111;"></div>
<div style="left:458px;top:381px;width:129px;height:3px;background:#111;"></div>
<div style="left:585px;top:368px;width:3px;height:30px;background:#111;"></div>
<div style="left:612px;top:368px;width:3px;height:30px;background:#111;"></div>
<div style="left:613px;top:381px;width:537px;height:3px;background:#111;"></div>
<div style="left:1187px;top:381px;width:123px;height:3px;background:#111;"></div>
<div style="left:1308px;top:372px;width:3px;height:21px;background:#111;"></div>
<svg style="left:1147.0px;top:366.0px;" width="44" height="32" viewBox="0 0 44 32"><path d="M8 1c-6 8-6 22 0 30M36 1c6 8 6 22 0 30" fill="none" stroke="#111" stroke-width="2.600"/></svg>
<div class="t" style="left:571.4px;top:332.0px;line-height:24px;font-size:19.7px;color:#111;font-family:'Liberation Mono',monospace;font-size:19.200px;">input</div>
<div class="t" style="left:1134.9px;top:332.0px;line-height:24px;font-size:19.7px;color:#111;font-family:'Liberation Mono',monospace;font-size:19.200px;">output</div>
<svg style="left:407.0px;top:649.0px;" width="20" height="20" viewBox="0 0 20 20"><circle cx="10" cy="10" r="9.800" fill="#0560de"/><text x="10.300" y="15.500" text-anchor="middle" font-family="Liberation Serif,serif" font-style="italic" font-weight="700" font-size="16" fill="#fff">i</text></svg>
<div class="t" style="left:436.5px;top:646.5px;line-height:30px;font-size:19.7px;color:#1f75fb;">信息</div>
<svg style="left:518.5px;top:650.0px;" width="19" height="17" viewBox="0 0 19 17"><g fill="none" stroke="#8a8d93" stroke-width="1.500"><rect x=".8" y=".8" width="17.400" height="15.400" rx="2.500"/><path d="M3.500 4.500h12"/><rect x="3.800" y="8" width="4.500" height="4.500"/><path d="M11 8.500h4.500M11 12h4.500"/></g></svg>
<div class="t" style="left:547.5px;top:646.5px;line-height:30px;font-size:19.7px;color:#75787e;">属性</div>
<div class="t" style="left:101.5px;width:800px;text-align:center;top:703.5px;line-height:30px;font-size:19.7px;color:#8a8d93;">常规</div>
<div class="t" style="left:267.5px;width:800px;text-align:center;top:703.5px;line-height:30px;font-size:19.7px;color:#1f75fb;">下载</div>
<div class="t" style="left:434px;width:800px;text-align:center;top:703.5px;line-height:30px;font-size:19.7px;color:#8a8d93;">编译</div>
<div style="left:421px;top:734px;width:1740px;height:1px;background:#8ab4f8;"></div>
<div style="left:588px;top:732px;width:166px;height:3px;background:#1a73e8;"></div>
<div style="left:421px;top:767.0px;width:1724px;height:40.2px;background:#fafafa;"></div>
<svg style="left:480.8px;top:777.3px;" width="20" height="20" viewBox="0 0 20 20"><circle cx="10" cy="10" r="9.75" fill="#0560de"/><circle cx="10" cy="5.500" r="1.600" fill="#fff"/><rect x="8.400" y="8.300" width="3.200" height="7.200" rx=".6" fill="#fff"/></svg>
<div class="t" style="left:680.3px;top:774.4px;line-height:30px;font-size:19.7px;color:#1f1f1f;"><span class="l" style="font-size:20.59px;letter-spacing:-1.15px">CPU</span>下载成功</div>
<div class="t" style="left:1744.4px;top:774.4px;line-height:30px;font-size:19.7px;color:#1f1f1f;"><span class="l" style="font-size:20.59px;letter-spacing:0.18px">10:22:09 AM</span></div>
<div style="left:421px;top:807.0px;width:1724px;height:40.2px;background:#fff;"></div>
<svg style="left:480.8px;top:817.3px;" width="20" height="20" viewBox="0 0 20 20"><circle cx="10" cy="10" r="9.75" fill="#0560de"/><circle cx="10" cy="5.500" r="1.600" fill="#fff"/><rect x="8.400" y="8.300" width="3.200" height="7.200" rx=".6" fill="#fff"/></svg>
<div class="t" style="left:680.3px;top:814.4px;line-height:30px;font-size:19.7px;color:#1f1f1f;"><span class="l" style="font-size:20.59px;letter-spacing:-0.51px">CPUCore</span>下载成功</div>
<div class="t" style="left:1744.4px;top:814.4px;line-height:30px;font-size:19.7px;color:#1f1f1f;"><span class="l" style="font-size:20.59px;letter-spacing:0.18px">10:22:09 AM</span></div>
<div style="left:421px;top:846.9px;width:1724px;height:40.2px;background:#fafafa;"></div>
<svg style="left:480.8px;top:857.2px;" width="20" height="20" viewBox="0 0 20 20"><circle cx="10" cy="10" r="9.75" fill="#0560de"/><circle cx="10" cy="5.500" r="1.600" fill="#fff"/><rect x="8.400" y="8.300" width="3.200" height="7.200" rx=".6" fill="#fff"/></svg>
<div class="t" style="left:680.3px;top:854.3px;line-height:30px;font-size:19.7px;color:#1f1f1f;"><span class="l" style="font-size:20.59px;letter-spacing:-0.20px">CPUExecutionSystem</span>下载成功</div>
<div class="t" style="left:1744.4px;top:854.3px;line-height:30px;font-size:19.7px;color:#1f1f1f;"><span class="l" style="font-size:20.59px;letter-spacing:0.18px">10:22:09 AM</span></div>
<div style="left:421px;top:886.9px;width:1724px;height:40.2px;background:#fff;"></div>
<svg style="left:480.8px;top:897.2px;" width="20" height="20" viewBox="0 0 20 20"><circle cx="10" cy="10" r="9.75" fill="#0560de"/><circle cx="10" cy="5.500" r="1.600" fill="#fff"/><rect x="8.400" y="8.300" width="3.200" height="7.200" rx=".6" fill="#fff"/></svg>
<div class="t" style="left:680.3px;top:894.3px;line-height:30px;font-size:19.7px;color:#1f1f1f;"><span class="l" style="font-size:20.59px;letter-spacing:0.34px">CardController</span>下载成功</div>
<div class="t" style="left:1744.4px;top:894.3px;line-height:30px;font-size:19.7px;color:#1f1f1f;"><span class="l" style="font-size:20.59px;letter-spacing:0.18px">10:22:09 AM</span></div>
<div style="left:421px;top:926.8px;width:1724px;height:40.2px;background:#fafafa;"></div>
<svg style="left:480.8px;top:937.1px;" width="20" height="20" viewBox="0 0 20 20"><circle cx="10" cy="10" r="9.75" fill="#0560de"/><circle cx="10" cy="5.500" r="1.600" fill="#fff"/><rect x="8.400" y="8.300" width="3.200" height="7.200" rx=".6" fill="#fff"/></svg>
<div class="t" style="left:680.3px;top:934.2px;line-height:30px;font-size:19.7px;color:#1f1f1f;"><span class="l" style="font-size:20.59px;letter-spacing:-0.00px">Interface_1</span>下载成功</div>
<div class="t" style="left:1744.4px;top:934.2px;line-height:30px;font-size:19.7px;color:#1f1f1f;"><span class="l" style="font-size:20.59px;letter-spacing:0.18px">10:22:09 AM</span></div>
<div style="left:421px;top:966.8px;width:1724px;height:40.2px;background:#fff;"></div>
<svg style="left:480.8px;top:977.1px;" width="20" height="20" viewBox="0 0 20 20"><circle cx="10" cy="10" r="9.75" fill="#0560de"/><circle cx="10" cy="5.500" r="1.600" fill="#fff"/><rect x="8.400" y="8.300" width="3.200" height="7.200" rx=".6" fill="#fff"/></svg>
<div class="t" style="left:680.3px;top:974.2px;line-height:30px;font-size:19.7px;color:#1f1f1f;"><span class="l" style="font-size:20.59px;letter-spacing:-0.00px">Interface_2</span>下载成功</div>
<div class="t" style="left:1744.4px;top:974.2px;line-height:30px;font-size:19.7px;color:#1f1f1f;"><span class="l" style="font-size:20.59px;letter-spacing:0.18px">10:22:09 AM</span></div>
<div style="left:421px;top:1006.8px;width:1724px;height:40.2px;background:#fafafa;"></div>
<svg style="left:480.8px;top:1017.1px;" width="20" height="20" viewBox="0 0 20 20"><circle cx="10" cy="10" r="9.75" fill="#0560de"/><circle cx="10" cy="5.500" r="1.600" fill="#fff"/><rect x="8.400" y="8.300" width="3.200" height="7.200" rx=".6" fill="#fff"/></svg>
<div class="t" style="left:680.3px;top:1014.2px;line-height:30px;font-size:19.7px;color:#1f1f1f;"><span class="l" style="font-size:20.59px;letter-spacing:-0.00px">Interface_3</span>下载成功</div>
<div class="t" style="left:1744.4px;top:1014.2px;line-height:30px;font-size:19.7px;color:#1f1f1f;"><span class="l" style="font-size:20.59px;letter-spacing:0.18px">10:22:09 AM</span></div>
<div style="left:421px;top:1046.7px;width:1724px;height:40.2px;background:#fff;"></div>
<svg style="left:480.8px;top:1057.0px;" width="20" height="20" viewBox="0 0 20 20"><circle cx="10" cy="10" r="9.75" fill="#0560de"/><circle cx="10" cy="5.500" r="1.600" fill="#fff"/><rect x="8.400" y="8.300" width="3.200" height="7.200" rx=".6" fill="#fff"/></svg>
<div class="t" style="left:680.3px;top:1054.1px;line-height:30px;font-size:19.7px;color:#1f1f1f;"><span class="l" style="font-size:20.59px;letter-spacing:-0.00px">Interface_4</span>下载成功</div>
<div class="t" style="left:1744.4px;top:1054.1px;line-height:30px;font-size:19.7px;color:#1f1f1f;"><span class="l" style="font-size:20.59px;letter-spacing:0.18px">10:22:09 AM</span></div>
<div style="left:421px;top:1086.7px;width:1724px;height:40.2px;background:#fafafa;"></div>
<svg style="left:480.8px;top:1097.0px;" width="20" height="20" viewBox="0 0 20 20"><circle cx="10" cy="10" r="9.75" fill="#0560de"/><circle cx="10" cy="5.500" r="1.600" fill="#fff"/><rect x="8.400" y="8.300" width="3.200" height="7.200" rx=".6" fill="#fff"/></svg>
<div class="t" style="left:680.3px;top:1094.1px;line-height:30px;font-size:19.7px;color:#1f1f1f;">下载硬件成功</div>
<div class="t" style="left:1744.4px;top:1094.1px;line-height:30px;font-size:19.7px;color:#1f1f1f;"><span class="l" style="font-size:20.59px;letter-spacing:0.18px">10:22:09 AM</span></div>
<div style="left:421px;top:1126.6px;width:1724px;height:40.2px;background:#fff;"></div>
<svg style="left:480.8px;top:1136.9px;" width="20" height="20" viewBox="0 0 20 20"><circle cx="10" cy="10" r="9.75" fill="#0560de"/><circle cx="10" cy="5.500" r="1.600" fill="#fff"/><rect x="8.400" y="8.300" width="3.200" height="7.200" rx=".6" fill="#fff"/></svg>
<svg style="left:623.5px;top:1143.9px;" width="12" height="7" viewBox="0 0 12 7"><path d="M1 1L6.0 6 11 1" fill="none" stroke="#1a73e8" stroke-width="2" stroke-linecap="round" stroke-linejoin="round"/></svg>
<div class="t" style="left:650.3px;top:1134.0px;line-height:30px;font-size:19.7px;color:#1f75fb;">软件</div>
<div style="left:421px;top:1166.6px;width:1724px;height:40.2px;background:#fafafa;"></div>
<svg style="left:480.8px;top:1176.9px;" width="20" height="20" viewBox="0 0 20 20"><circle cx="10" cy="10" r="9.75" fill="#0560de"/><circle cx="10" cy="5.500" r="1.600" fill="#fff"/><rect x="8.400" y="8.300" width="3.200" height="7.200" rx=".6" fill="#fff"/></svg>
<svg style="left:653.5px;top:1183.9px;" width="12" height="7" viewBox="0 0 12 7"><path d="M1 1L6.0 6 11 1" fill="none" stroke="#1a73e8" stroke-width="2" stroke-linecap="round" stroke-linejoin="round"/></svg>
<div class="t" style="left:680.3px;top:1174.0px;line-height:30px;font-size:19.7px;color:#1f75fb;">全局变量集合<span class="l" style="font-size:20.59px;letter-spacing:-1.36px">GVS</span></div>
<div style="left:421px;top:1206.6px;width:1724px;height:40.2px;background:#fff;"></div>
<svg style="left:480.8px;top:1216.9px;" width="20" height="20" viewBox="0 0 20 20"><circle cx="10" cy="10" r="9.75" fill="#0560de"/><circle cx="10" cy="5.500" r="1.600" fill="#fff"/><rect x="8.400" y="8.300" width="3.200" height="7.200" rx=".6" fill="#fff"/></svg>
<div class="t" style="left:710.3px;top:1214.0px;line-height:30px;font-size:19.7px;color:#1f1f1f;"><span class="l" style="font-size:20.59px;letter-spacing:-0.74px">STD.INPUT</span>删除成功</div>
<div class="t" style="left:1744.4px;top:1214.0px;line-height:30px;font-size:19.7px;color:#1f1f1f;"><span class="l" style="font-size:20.59px;letter-spacing:0.18px">10:22:09 AM</span></div>
<div style="left:421px;top:1246.5px;width:1724px;height:40.2px;background:#fafafa;"></div>
<svg style="left:480.8px;top:1256.8px;" width="20" height="20" viewBox="0 0 20 20"><circle cx="10" cy="10" r="9.75" fill="#0560de"/><circle cx="10" cy="5.500" r="1.600" fill="#fff"/><rect x="8.400" y="8.300" width="3.200" height="7.200" rx=".6" fill="#fff"/></svg>
<div class="t" style="left:710.3px;top:1253.9px;line-height:30px;font-size:19.7px;color:#1f1f1f;"><span class="l" style="font-size:20.59px;letter-spacing:-0.91px">STD.OUTPUT</span>删除成功</div>
<div class="t" style="left:1744.4px;top:1253.9px;line-height:30px;font-size:19.7px;color:#1f1f1f;"><span class="l" style="font-size:20.59px;letter-spacing:0.18px">10:22:09 AM</span></div>
<div style="left:421px;top:1286.5px;width:1724px;height:40.2px;background:#fff;"></div>
<svg style="left:480.8px;top:1296.8px;" width="20" height="20" viewBox="0 0 20 20"><circle cx="10" cy="10" r="9.75" fill="#0560de"/><circle cx="10" cy="5.500" r="1.600" fill="#fff"/><rect x="8.400" y="8.300" width="3.200" height="7.200" rx=".6" fill="#fff"/></svg>
<div class="t" style="left:710.3px;top:1293.9px;line-height:30px;font-size:19.7px;color:#1f1f1f;"><span class="l" style="font-size:20.59px;letter-spacing:-1.33px">STD.TEMPER</span>删除成功</div>
<div class="t" style="left:1744.4px;top:1293.9px;line-height:30px;font-size:19.7px;color:#1f1f1f;"><span class="l" style="font-size:20.59px;letter-spacing:0.18px">10:22:09 AM</span></div>
<div style="left:421px;top:1326.4px;width:1724px;height:40.2px;background:#fafafa;"></div>
<svg style="left:480.8px;top:1336.7px;" width="20" height="20" viewBox="0 0 20 20"><circle cx="10" cy="10" r="9.75" fill="#0560de"/><circle cx="10" cy="5.500" r="1.600" fill="#fff"/><rect x="8.400" y="8.300" width="3.200" height="7.200" rx=".6" fill="#fff"/></svg>
<div class="t" style="left:710.3px;top:1333.8px;line-height:30px;font-size:19.7px;color:#1f1f1f;"><span class="l" style="font-size:20.59px;letter-spacing:-0.55px">STD.NGVS_R1_setting</span>删除成功</div>
<div class="t" style="left:1744.4px;top:1333.8px;line-height:30px;font-size:19.7px;color:#1f1f1f;"><span class="l" style="font-size:20.59px;letter-spacing:0.18px">10:22:09 AM</span></div>
<div style="left:421px;top:1366.4px;width:1724px;height:40.2px;background:#fff;"></div>
<svg style="left:480.8px;top:1376.7px;" width="20" height="20" viewBox="0 0 20 20"><circle cx="10" cy="10" r="9.75" fill="#0560de"/><circle cx="10" cy="5.500" r="1.600" fill="#fff"/><rect x="8.400" y="8.300" width="3.200" height="7.200" rx=".6" fill="#fff"/></svg>
<div class="t" style="left:710.3px;top:1373.8px;line-height:30px;font-size:19.7px;color:#1f1f1f;"><span class="l" style="font-size:20.59px;letter-spacing:-1.09px">STD.NGVS_R1</span>删除成功</div>
<div class="t" style="left:1744.4px;top:1373.8px;line-height:30px;font-size:19.7px;color:#1f1f1f;"><span class="l" style="font-size:20.59px;letter-spacing:0.18px">10:22:09 AM</span></div>
<div style="left:421px;top:1406.4px;width:1724px;height:40.2px;background:#fafafa;"></div>
<svg style="left:480.8px;top:1416.7px;" width="20" height="20" viewBox="0 0 20 20"><circle cx="10" cy="10" r="9.75" fill="#0560de"/><circle cx="10" cy="5.500" r="1.600" fill="#fff"/><rect x="8.400" y="8.300" width="3.200" height="7.200" rx=".6" fill="#fff"/></svg>
<div class="t" style="left:710.3px;top:1413.8px;line-height:30px;font-size:19.7px;color:#1f1f1f;"><span class="l" style="font-size:20.59px;letter-spacing:-1.33px">NGVS_SET_STD.NGVS_R1</span>删除成功</div>
<div class="t" style="left:1744.4px;top:1413.8px;line-height:30px;font-size:19.7px;color:#1f1f1f;"><span class="l" style="font-size:20.59px;letter-spacing:0.18px">10:22:09 AM</span></div>
<div style="left:421px;top:1446.3px;width:1724px;height:40.2px;background:#fff;"></div>
<svg style="left:480.8px;top:1456.6px;" width="20" height="20" viewBox="0 0 20 20"><circle cx="10" cy="10" r="9.75" fill="#0560de"/><circle cx="10" cy="5.500" r="1.600" fill="#fff"/><rect x="8.400" y="8.300" width="3.200" height="7.200" rx=".6" fill="#fff"/></svg>
<div class="t" style="left:710.3px;top:1453.7px;line-height:30px;font-size:19.7px;color:#1f1f1f;"><span class="l" style="font-size:20.59px;letter-spacing:-1.23px">STD.GVS_1</span>下载成功</div>
<div class="t" style="left:1744.4px;top:1453.7px;line-height:30px;font-size:19.7px;color:#1f1f1f;"><span class="l" style="font-size:20.59px;letter-spacing:0.18px">10:22:09 AM</span></div>
<div style="left:421px;top:1486.3px;width:1724px;height:40.2px;background:#fafafa;"></div>
<svg style="left:480.8px;top:1496.6px;" width="20" height="20" viewBox="0 0 20 20"><circle cx="10" cy="10" r="9.75" fill="#0560de"/><circle cx="10" cy="5.500" r="1.600" fill="#fff"/><rect x="8.400" y="8.300" width="3.200" height="7.200" rx=".6" fill="#fff"/></svg>
<div class="t" style="left:710.3px;top:1493.7px;line-height:30px;font-size:19.7px;color:#1f1f1f;"><span class="l" style="font-size:20.59px;letter-spacing:-0.74px">STD.INPUT</span>下载成功</div>
<div class="t" style="left:1744.4px;top:1493.7px;line-height:30px;font-size:19.7px;color:#1f1f1f;"><span class="l" style="font-size:20.59px;letter-spacing:0.18px">10:22:09 AM</span></div>
<div style="left:421px;top:1526.2px;width:1724px;height:40.2px;background:#f2f2f2;"></div>
<svg style="left:480.8px;top:1536.5px;" width="20" height="20" viewBox="0 0 20 20"><circle cx="10" cy="10" r="9.75" fill="#0560de"/><circle cx="10" cy="5.500" r="1.600" fill="#fff"/><rect x="8.400" y="8.300" width="3.200" height="7.200" rx=".6" fill="#fff"/></svg>
<div class="t" style="left:710.3px;top:1533.6px;line-height:30px;font-size:19.7px;color:#1f1f1f;"><span class="l" style="font-size:20.59px;letter-spacing:-0.91px">STD.OUTPUT</span>下载成功</div>
<div class="t" style="left:1744.4px;top:1533.6px;line-height:30px;font-size:19.7px;color:#1f1f1f;"><span class="l" style="font-size:20.59px;letter-spacing:0.18px">10:22:09 AM</span></div>
<div style="left:421px;top:1566.2px;width:1724px;height:40.2px;background:#fafafa;"></div>
<svg style="left:480.8px;top:1576.5px;" width="20" height="20" viewBox="0 0 20 20"><circle cx="10" cy="10" r="9.75" fill="#0560de"/><circle cx="10" cy="5.500" r="1.600" fill="#fff"/><rect x="8.400" y="8.300" width="3.200" height="7.200" rx=".6" fill="#fff"/></svg>
<div class="t" style="left:680.3px;top:1573.6px;line-height:30px;font-size:19.7px;color:#1f75fb;">程序单元</div>
<div style="left:421px;top:1606.2px;width:1724px;height:40.2px;background:#fff;"></div>
<svg style="left:480.8px;top:1616.5px;" width="20" height="20" viewBox="0 0 20 20"><circle cx="10" cy="10" r="9.75" fill="#0560de"/><circle cx="10" cy="5.500" r="1.600" fill="#fff"/><rect x="8.400" y="8.300" width="3.200" height="7.200" rx=".6" fill="#fff"/></svg>
<svg style="left:653.5px;top:1623.5px;" width="12" height="7" viewBox="0 0 12 7"><path d="M1 1L6.0 6 11 1" fill="none" stroke="#1a73e8" stroke-width="2" stroke-linecap="round" stroke-linejoin="round"/></svg>
<div class="t" style="left:680.3px;top:1613.6px;line-height:30px;font-size:19.7px;color:#1f75fb;">任务</div>
<div style="left:421px;top:1646.1px;width:1724px;height:40.2px;background:#fafafa;"></div>
<svg style="left:480.8px;top:1656.4px;" width="20" height="20" viewBox="0 0 20 20"><circle cx="10" cy="10" r="9.75" fill="#0560de"/><circle cx="10" cy="5.500" r="1.600" fill="#fff"/><rect x="8.400" y="8.300" width="3.200" height="7.200" rx=".6" fill="#fff"/></svg>
<div class="t" style="left:710.3px;top:1653.5px;line-height:30px;font-size:19.7px;color:#1f1f1f;"><span class="l" style="font-size:20.59px;letter-spacing:-1.68px">CYCLE_1</span>删除成功</div>
<div class="t" style="left:1744.4px;top:1653.5px;line-height:30px;font-size:19.7px;color:#1f1f1f;"><span class="l" style="font-size:20.59px;letter-spacing:0.18px">10:22:09 AM</span></div>
<div style="left:421px;top:1686.1px;width:1724px;height:40.2px;background:#fff;"></div>
<svg style="left:480.8px;top:1696.4px;" width="20" height="20" viewBox="0 0 20 20"><circle cx="10" cy="10" r="9.75" fill="#0560de"/><circle cx="10" cy="5.500" r="1.600" fill="#fff"/><rect x="8.400" y="8.300" width="3.200" height="7.200" rx=".6" fill="#fff"/></svg>
<div class="t" style="left:680.3px;top:1693.5px;line-height:30px;font-size:19.7px;color:#1f75fb;"><span class="l" style="font-size:20.59px;letter-spacing:0.07px">IO</span>映射变量</div>
<div style="left:421px;top:1726.0px;width:1724px;height:40.2px;background:#fafafa;"></div>
<svg style="left:480.8px;top:1736.3px;" width="20" height="20" viewBox="0 0 20 20"><circle cx="10" cy="10" r="9.75" fill="#0560de"/><circle cx="10" cy="5.500" r="1.600" fill="#fff"/><rect x="8.400" y="8.300" width="3.200" height="7.200" rx=".6" fill="#fff"/></svg>
<div class="t" style="left:680.3px;top:1733.4px;line-height:30px;font-size:19.7px;color:#1f75fb;">用户数据类型</div>
<div style="left:421px;top:1766.0px;width:1724px;height:40.2px;background:#fff;"></div>
<svg style="left:480.8px;top:1776.3px;" width="20" height="20" viewBox="0 0 20 20"><circle cx="10" cy="10" r="9.75" fill="#0560de"/><circle cx="10" cy="5.500" r="1.600" fill="#fff"/><rect x="8.400" y="8.300" width="3.200" height="7.200" rx=".6" fill="#fff"/></svg>
<div class="t" style="left:680.3px;top:1773.4px;line-height:30px;font-size:19.7px;color:#1f75fb;">工艺控制</div>
<div style="left:421px;top:1806.0px;width:1724px;height:40.2px;background:#fafafa;"></div>
<svg style="left:480.8px;top:1816.3px;" width="20" height="20" viewBox="0 0 20 20"><circle cx="10" cy="10" r="9.75" fill="#0560de"/><circle cx="10" cy="5.500" r="1.600" fill="#fff"/><rect x="8.400" y="8.300" width="3.200" height="7.200" rx=".6" fill="#fff"/></svg>
<div class="t" style="left:680.3px;top:1813.4px;line-height:30px;font-size:19.7px;color:#1f75fb;">库创建管理</div>
<div style="left:421px;top:1845.9px;width:1724px;height:40.2px;background:#fff;"></div>
<svg style="left:480.8px;top:1856.2px;" width="20" height="20" viewBox="0 0 20 20"><circle cx="10" cy="10" r="9.75" fill="#0560de"/><circle cx="10" cy="5.500" r="1.600" fill="#fff"/><rect x="8.400" y="8.300" width="3.200" height="7.200" rx=".6" fill="#fff"/></svg>
<div class="t" style="left:680.3px;top:1853.3px;line-height:30px;font-size:19.7px;color:#1f1f1f;">下载软件成功</div>
<div class="t" style="left:1744.4px;top:1853.3px;line-height:30px;font-size:19.7px;color:#1f1f1f;"><span class="l" style="font-size:20.59px;letter-spacing:0.18px">10:22:09 AM</span></div>
<div style="left:421px;top:735px;width:1740px;height:41px;background:#f3f3f3;box-shadow:0 3px 6px rgba(0,0,0,.13);"></div>
<div style="left:575px;top:744px;width:1px;height:23px;background:#b8b8b8;"></div>
<div style="left:1730px;top:744px;width:1px;height:23px;background:#b8b8b8;"></div>
<div class="t" style="left:590px;top:742.2px;line-height:30px;font-size:19.7px;color:#1f1f1f;">路径</div>
<div class="t" style="left:1744.4px;top:742.2px;line-height:30px;font-size:19.7px;color:#1f1f1f;">时间</div>
<div style="left:2145px;top:735px;width:16px;height:1145px;background:#c1c1c1;"></div>
<div style="left:2152px;top:1052px;width:9px;height:834px;background:#ccc;border-radius:5px;"></div>
<div style="left:2152px;top:1052px;width:9px;height:829px;background:#a1a1a1;border-radius:5px 5px 0 0;"></div>
<svg style="left:2510.0px;top:102.0px;" width="36" height="36" viewBox="0 0 36 36"><g fill="#0b57d0"><rect x="0" y="1" width="16" height="15" rx="5"/><rect x="20" y="0" width="16" height="17" rx="4"/><rect x="0" y="20" width="16" height="16" rx="4"/><rect x="20" y="22" width="16" height="13" rx="5"/></g><path d="M0 8a6 5 0 0 1 6-7h4a6 5 0 0 1 6 7 8 5 0 0 1-16 0Z" fill="#3340a8"/><g fill="#3340a8"><rect x="20" y="14" width="16" height="3" rx="1.500"/><rect x="0" y="33" width="16" height="3" rx="1.500"/><rect x="20" y="32.500" width="16" height="3" rx="1.500"/></g></svg>
<div class="t" style="left:2214.8px;top:97.7px;line-height:30px;font-size:19.7px;color:#1f1f1f;">资源</div>
<svg style="left:2450.5px;top:106.5px;" width="21" height="16" viewBox="0 0 21 16"><g fill="#1a73e8"><rect x="0" y="1" width="9" height="2.300"/><rect x="0" y="7" width="9" height="2.300"/><rect x="0" y="13" width="20" height="2.300"/><path d="M11 1.500h10L16 8Z"/></g></svg>
<div style="left:2215px;top:139px;width:115px;height:41px;background:#fff;border:1px solid #e3e6ec;border-radius:7px;box-sizing:border-box;"></div>
<div class="t" style="left:2232px;top:145.5px;line-height:30px;font-size:19.7px;color:#8c8c8c;">搜索</div>
<svg style="left:2349.5px;top:149.0px;" width="22" height="22" viewBox="0 0 22 22"><g fill="none" stroke="#1f75fb" stroke-width="1.800"><circle cx="9.500" cy="9.500" r="8"/><path d="M15.500 15.500l5.500 5.500"/></g></svg>
<svg style="left:2398.5px;top:147.0px;" width="25" height="25" viewBox="0 0 25 25"><g fill="none" stroke="#1f75fb" stroke-width="1.800" stroke-linejoin="round"><path d="M3 22l1.200-5L18.500 2.500a2.300 2.300 0 0 1 3.300 0l.7.700a2.300 2.300 0 0 1 0 3.300L8 21Z"/><path d="M2.500 6L6 2.500 22.500 19 19 22.500Z"/></g></svg>
<div style="left:2441px;top:141px;width:40px;height:38px;background:#d3e3fd;border-radius:6px;"></div>
<svg style="left:2450.0px;top:149.0px;" width="22" height="22" viewBox="0 0 22 22"><g fill="#1a73e8"><rect x="1" y="1" width="20" height="2.300"/><rect x="1" y="9" width="7" height="2.300"/><rect x="1" y="17" width="6" height="2.300"/><path d="M15 6.500l2.200 4.300 4.800.7-3.500 3.300.9 4.700-4.400-2.300-4.300 2.300.8-4.700L8 11.500l4.800-.7Z"/></g></svg>
<div style="left:2199px;top:189px;width:298px;height:37px;background:#e1ecfd;border-radius:5px;"></div>
<div class="t" style="left:2203px;top:193.0px;line-height:30px;font-size:19.8px;color:#1f75fb;font-weight:700;">基础指令</div>
<svg style="left:2470.0px;top:201.5px;" width="18" height="10" viewBox="0 0 18 10"><path d="M1 1l8 8 8-8" fill="none" stroke="#1f75fb" stroke-width="1.600"/></svg>
<div style="left:2201px;top:229px;width:293px;height:37px;background:#f0f1f5;border-radius:7px;"></div>
<svg style="left:2213.7px;top:237.4px;" width="10" height="20" viewBox="0 0 10 20"><path d="M1 1l8 9-8 9" fill="none" stroke="#2a2a2a" stroke-width="1.700"/></svg>
<svg style="left:2237.5px;top:238.9px;" width="18" height="16" viewBox="0 0 18 16"><path d="M1 14V2.500A1.500 1.500 0 0 1 2.500 1h4l1.500 2.500h8a1.500 1.500 0 0 1 1.500 1.500V14a1.200 1.200 0 0 1-1.200 1.200H2.200A1.200 1.200 0 0 1 1 14Z" fill="none" stroke="#333" stroke-width="1.500"/></svg>
<div class="t" style="left:2266.8px;top:232.9px;line-height:30px;font-size:19.7px;color:#1f1f1f;">常规及连接元素</div>
<div style="left:2201px;top:269px;width:293px;height:37px;background:#f0f1f5;border-radius:7px;"></div>
<svg style="left:2213.7px;top:277.5px;" width="10" height="20" viewBox="0 0 10 20"><path d="M1 1l8 9-8 9" fill="none" stroke="#2a2a2a" stroke-width="1.700"/></svg>
<svg style="left:2237.5px;top:279.0px;" width="18" height="16" viewBox="0 0 18 16"><path d="M1 14V2.500A1.500 1.500 0 0 1 2.500 1h4l1.500 2.500h8a1.500 1.500 0 0 1 1.500 1.500V14a1.200 1.200 0 0 1-1.200 1.200H2.200A1.200 1.200 0 0 1 1 14Z" fill="none" stroke="#333" stroke-width="1.500"/></svg>
<div class="t" style="left:2266.8px;top:273.0px;line-height:30px;font-size:19.7px;color:#1f1f1f;">布尔指令</div>
<div style="left:2201px;top:309px;width:293px;height:37px;background:#f0f1f5;border-radius:7px;"></div>
<svg style="left:2213.7px;top:317.6px;" width="10" height="20" viewBox="0 0 10 20"><path d="M1 1l8 9-8 9" fill="none" stroke="#2a2a2a" stroke-width="1.700"/></svg>
<svg style="left:2237.5px;top:319.1px;" width="18" height="16" viewBox="0 0 18 16"><path d="M1 14V2.500A1.500 1.500 0 0 1 2.500 1h4l1.500 2.500h8a1.500 1.500 0 0 1 1.500 1.500V14a1.200 1.200 0 0 1-1.200 1.200H2.200A1.200 1.200 0 0 1 1 14Z" fill="none" stroke="#333" stroke-width="1.500"/></svg>
<div class="t" style="left:2266.8px;top:313.1px;line-height:30px;font-size:19.7px;color:#1f1f1f;">跳转指令</div>
<div style="left:2199px;top:432px;width:298px;height:3px;background:#b5cffb;"></div>
<div style="left:2199px;top:436.5px;width:298px;height:34.5px;background:#e1ecfd;border-radius:5px;"></div>
<div class="t" style="left:2203px;top:439.2px;line-height:30px;font-size:19.8px;color:#1f75fb;font-weight:700;">系统库初级指令</div>
<svg style="left:2470.0px;top:447.8px;" width="18" height="10" viewBox="0 0 18 10"><path d="M1 1l8 8 8-8" fill="none" stroke="#1f75fb" stroke-width="1.600"/></svg>
<div style="left:2201px;top:475px;width:293px;height:37px;background:#f0f1f5;border-radius:7px;"></div>
<svg style="left:2213.7px;top:483.5px;" width="10" height="20" viewBox="0 0 10 20"><path d="M1 1l8 9-8 9" fill="none" stroke="#2a2a2a" stroke-width="1.700"/></svg>
<svg style="left:2237.5px;top:485.0px;" width="18" height="16" viewBox="0 0 18 16"><path d="M1 14V2.500A1.500 1.500 0 0 1 2.500 1h4l1.500 2.500h8a1.500 1.500 0 0 1 1.500 1.500V14a1.200 1.200 0 0 1-1.200 1.200H2.200A1.200 1.200 0 0 1 1 14Z" fill="none" stroke="#333" stroke-width="1.500"/></svg>
<div class="t" style="left:2266.8px;top:479.0px;line-height:30px;font-size:19.7px;color:#1f1f1f;">布尔逻辑运算</div>
<div class="t" style="left:2399.6px;top:479.0px;line-height:30px;font-size:19.7px;color:#1f1f1f;"><span class="l" style="font-size:20.59px;letter-spacing:-0.32px">V1.0</span></div>
<svg style="left:2458.5px;top:490.0px;" width="11" height="7" viewBox="0 0 11 7"><path d="M1 1l4.500 4.500L10 1" fill="none" stroke="#dadce0" stroke-width="1.500"/></svg>
<div style="left:2201px;top:515px;width:293px;height:37px;background:#f0f1f5;border-radius:7px;"></div>
<svg style="left:2213.7px;top:523.5px;" width="10" height="20" viewBox="0 0 10 20"><path d="M1 1l8 9-8 9" fill="none" stroke="#2a2a2a" stroke-width="1.700"/></svg>
<svg style="left:2237.5px;top:525.0px;" width="18" height="16" viewBox="0 0 18 16"><path d="M1 14V2.500A1.500 1.500 0 0 1 2.500 1h4l1.500 2.500h8a1.500 1.500 0 0 1 1.500 1.500V14a1.200 1.200 0 0 1-1.200 1.200H2.200A1.200 1.200 0 0 1 1 14Z" fill="none" stroke="#333" stroke-width="1.500"/></svg>
<div class="t" style="left:2266.8px;top:519.0px;line-height:30px;font-size:19.7px;color:#1f1f1f;">计数器</div>
<div class="t" style="left:2399.6px;top:519.0px;line-height:30px;font-size:19.7px;color:#1f1f1f;"><span class="l" style="font-size:20.59px;letter-spacing:-0.32px">V1.0</span></div>
<svg style="left:2458.5px;top:530.0px;" width="11" height="7" viewBox="0 0 11 7"><path d="M1 1l4.500 4.500L10 1" fill="none" stroke="#dadce0" stroke-width="1.500"/></svg>
<div style="left:2201px;top:555px;width:293px;height:37px;background:#f0f1f5;border-radius:7px;"></div>
<svg style="left:2213.7px;top:563.5px;" width="10" height="20" viewBox="0 0 10 20"><path d="M1 1l8 9-8 9" fill="none" stroke="#2a2a2a" stroke-width="1.700"/></svg>
<svg style="left:2237.5px;top:565.0px;" width="18" height="16" viewBox="0 0 18 16"><path d="M1 14V2.500A1.500 1.500 0 0 1 2.500 1h4l1.500 2.500h8a1.500 1.500 0 0 1 1.500 1.500V14a1.200 1.200 0 0 1-1.200 1.200H2.200A1.200 1.200 0 0 1 1 14Z" fill="none" stroke="#333" stroke-width="1.500"/></svg>
<div class="t" style="left:2266.8px;top:559.0px;line-height:30px;font-size:19.7px;color:#1f1f1f;">定时器</div>
<div class="t" style="left:2399.6px;top:559.0px;line-height:30px;font-size:19.7px;color:#1f1f1f;"><span class="l" style="font-size:20.59px;letter-spacing:-0.32px">V1.0</span></div>
<svg style="left:2458.5px;top:570.0px;" width="11" height="7" viewBox="0 0 11 7"><path d="M1 1l4.500 4.500L10 1" fill="none" stroke="#dadce0" stroke-width="1.500"/></svg>
<div style="left:2201px;top:595px;width:293px;height:37px;background:#f0f1f5;border-radius:7px;"></div>
<svg style="left:2213.7px;top:603.5px;" width="10" height="20" viewBox="0 0 10 20"><path d="M1 1l8 9-8 9" fill="none" stroke="#2a2a2a" stroke-width="1.700"/></svg>
<svg style="left:2237.5px;top:605.0px;" width="18" height="16" viewBox="0 0 18 16"><path d="M1 14V2.500A1.500 1.500 0 0 1 2.500 1h4l1.500 2.500h8a1.500 1.500 0 0 1 1.500 1.500V14a1.200 1.200 0 0 1-1.200 1.200H2.200A1.200 1.200 0 0 1 1 14Z" fill="none" stroke="#333" stroke-width="1.500"/></svg>
<div class="t" style="left:2266.8px;top:599.0px;line-height:30px;font-size:19.7px;color:#1f1f1f;">数值运算</div>
<div class="t" style="left:2399.6px;top:599.0px;line-height:30px;font-size:19.7px;color:#1f1f1f;"><span class="l" style="font-size:20.59px;letter-spacing:-0.32px">V1.0</span></div>
<svg style="left:2458.5px;top:610.0px;" width="11" height="7" viewBox="0 0 11 7"><path d="M1 1l4.500 4.500L10 1" fill="none" stroke="#dadce0" stroke-width="1.500"/></svg>
<div style="left:2201px;top:635px;width:293px;height:37px;background:#f0f1f5;border-radius:7px;"></div>
<svg style="left:2213.7px;top:643.5px;" width="10" height="20" viewBox="0 0 10 20"><path d="M1 1l8 9-8 9" fill="none" stroke="#2a2a2a" stroke-width="1.700"/></svg>
<svg style="left:2237.5px;top:645.0px;" width="18" height="16" viewBox="0 0 18 16"><path d="M1 14V2.500A1.500 1.500 0 0 1 2.500 1h4l1.500 2.500h8a1.500 1.500 0 0 1 1.500 1.500V14a1.200 1.200 0 0 1-1.200 1.200H2.200A1.200 1.200 0 0 1 1 14Z" fill="none" stroke="#333" stroke-width="1.500"/></svg>
<div class="t" style="left:2266.8px;top:639.0px;line-height:30px;font-size:19.7px;color:#1f1f1f;">算术运算</div>
<div class="t" style="left:2399.6px;top:639.0px;line-height:30px;font-size:19.7px;color:#1f1f1f;"><span class="l" style="font-size:20.59px;letter-spacing:-0.32px">V1.0</span></div>
<svg style="left:2458.5px;top:650.0px;" width="11" height="7" viewBox="0 0 11 7"><path d="M1 1l4.500 4.500L10 1" fill="none" stroke="#dadce0" stroke-width="1.500"/></svg>
<div style="left:2201px;top:675px;width:293px;height:37px;background:#f0f1f5;border-radius:7px;"></div>
<svg style="left:2213.7px;top:683.5px;" width="10" height="20" viewBox="0 0 10 20"><path d="M1 1l8 9-8 9" fill="none" stroke="#2a2a2a" stroke-width="1.700"/></svg>
<svg style="left:2237.5px;top:685.0px;" width="18" height="16" viewBox="0 0 18 16"><path d="M1 14V2.500A1.500 1.500 0 0 1 2.500 1h4l1.500 2.500h8a1.500 1.500 0 0 1 1.500 1.500V14a1.200 1.200 0 0 1-1.200 1.200H2.200A1.200 1.200 0 0 1 1 14Z" fill="none" stroke="#333" stroke-width="1.500"/></svg>
<div class="t" style="left:2266.8px;top:679.0px;line-height:30px;font-size:19.7px;color:#1f1f1f;">串移位运算</div>
<div class="t" style="left:2399.6px;top:679.0px;line-height:30px;font-size:19.7px;color:#1f1f1f;"><span class="l" style="font-size:20.59px;letter-spacing:-0.32px">V1.0</span></div>
<svg style="left:2458.5px;top:690.0px;" width="11" height="7" viewBox="0 0 11 7"><path d="M1 1l4.500 4.500L10 1" fill="none" stroke="#dadce0" stroke-width="1.500"/></svg>
<div style="left:2201px;top:715px;width:293px;height:37px;background:#f0f1f5;border-radius:7px;"></div>
<svg style="left:2213.7px;top:723.5px;" width="10" height="20" viewBox="0 0 10 20"><path d="M1 1l8 9-8 9" fill="none" stroke="#2a2a2a" stroke-width="1.700"/></svg>
<svg style="left:2237.5px;top:725.0px;" width="18" height="16" viewBox="0 0 18 16"><path d="M1 14V2.500A1.500 1.500 0 0 1 2.500 1h4l1.500 2.500h8a1.500 1.500 0 0 1 1.500 1.500V14a1.200 1.200 0 0 1-1.200 1.200H2.200A1.200 1.200 0 0 1 1 14Z" fill="none" stroke="#333" stroke-width="1.500"/></svg>
<div class="t" style="left:2266.8px;top:719.0px;line-height:30px;font-size:19.7px;color:#1f1f1f;">位逻辑运算</div>
<div class="t" style="left:2399.6px;top:719.0px;line-height:30px;font-size:19.7px;color:#1f1f1f;"><span class="l" style="font-size:20.59px;letter-spacing:-0.32px">V1.0</span></div>
<svg style="left:2458.5px;top:730.0px;" width="11" height="7" viewBox="0 0 11 7"><path d="M1 1l4.500 4.500L10 1" fill="none" stroke="#dadce0" stroke-width="1.500"/></svg>
<div style="left:2201px;top:755px;width:293px;height:37px;background:#f0f1f5;border-radius:7px;"></div>
<svg style="left:2213.7px;top:763.5px;" width="10" height="20" viewBox="0 0 10 20"><path d="M1 1l8 9-8 9" fill="none" stroke="#2a2a2a" stroke-width="1.700"/></svg>
<svg style="left:2237.5px;top:765.0px;" width="18" height="16" viewBox="0 0 18 16"><path d="M1 14V2.500A1.500 1.500 0 0 1 2.500 1h4l1.500 2.500h8a1.500 1.500 0 0 1 1.500 1.500V14a1.200 1.200 0 0 1-1.200 1.200H2.200A1.200 1.200 0 0 1 1 14Z" fill="none" stroke="#333" stroke-width="1.500"/></svg>
<div class="t" style="left:2266.8px;top:759.0px;line-height:30px;font-size:19.7px;color:#1f1f1f;">位组装指令</div>
<div class="t" style="left:2399.6px;top:759.0px;line-height:30px;font-size:19.7px;color:#1f1f1f;"><span class="l" style="font-size:20.59px;letter-spacing:-0.32px">V1.0</span></div>
<svg style="left:2458.5px;top:770.0px;" width="11" height="7" viewBox="0 0 11 7"><path d="M1 1l4.500 4.500L10 1" fill="none" stroke="#dadce0" stroke-width="1.500"/></svg>
<div style="left:2201px;top:795px;width:293px;height:37px;background:#f0f1f5;border-radius:7px;"></div>
<svg style="left:2213.7px;top:803.5px;" width="10" height="20" viewBox="0 0 10 20"><path d="M1 1l8 9-8 9" fill="none" stroke="#2a2a2a" stroke-width="1.700"/></svg>
<svg style="left:2237.5px;top:805.0px;" width="18" height="16" viewBox="0 0 18 16"><path d="M1 14V2.500A1.500 1.500 0 0 1 2.500 1h4l1.500 2.500h8a1.500 1.500 0 0 1 1.500 1.500V14a1.200 1.200 0 0 1-1.200 1.200H2.200A1.200 1.200 0 0 1 1 14Z" fill="none" stroke="#333" stroke-width="1.500"/></svg>
<div class="t" style="left:2266.8px;top:799.0px;line-height:30px;font-size:19.7px;color:#1f1f1f;">选择语句</div>
<div class="t" style="left:2399.6px;top:799.0px;line-height:30px;font-size:19.7px;color:#1f1f1f;"><span class="l" style="font-size:20.59px;letter-spacing:-0.32px">V1.0</span></div>
<svg style="left:2458.5px;top:810.0px;" width="11" height="7" viewBox="0 0 11 7"><path d="M1 1l4.500 4.500L10 1" fill="none" stroke="#dadce0" stroke-width="1.500"/></svg>
<div style="left:2201px;top:835px;width:293px;height:37px;background:#f0f1f5;border-radius:7px;"></div>
<svg style="left:2213.7px;top:843.5px;" width="10" height="20" viewBox="0 0 10 20"><path d="M1 1l8 9-8 9" fill="none" stroke="#2a2a2a" stroke-width="1.700"/></svg>
<svg style="left:2237.5px;top:845.0px;" width="18" height="16" viewBox="0 0 18 16"><path d="M1 14V2.500A1.500 1.500 0 0 1 2.500 1h4l1.500 2.500h8a1.500 1.500 0 0 1 1.500 1.500V14a1.200 1.200 0 0 1-1.200 1.200H2.200A1.200 1.200 0 0 1 1 14Z" fill="none" stroke="#333" stroke-width="1.500"/></svg>
<div class="t" style="left:2266.8px;top:839.0px;line-height:30px;font-size:19.7px;color:#1f1f1f;">比较语句</div>
<div class="t" style="left:2399.6px;top:839.0px;line-height:30px;font-size:19.7px;color:#1f1f1f;"><span class="l" style="font-size:20.59px;letter-spacing:-0.32px">V1.0</span></div>
<svg style="left:2458.5px;top:850.0px;" width="11" height="7" viewBox="0 0 11 7"><path d="M1 1l4.500 4.500L10 1" fill="none" stroke="#dadce0" stroke-width="1.500"/></svg>
<div style="left:2201px;top:875px;width:293px;height:37px;background:#f0f1f5;border-radius:7px;"></div>
<svg style="left:2213.7px;top:883.5px;" width="10" height="20" viewBox="0 0 10 20"><path d="M1 1l8 9-8 9" fill="none" stroke="#2a2a2a" stroke-width="1.700"/></svg>
<svg style="left:2237.5px;top:885.0px;" width="18" height="16" viewBox="0 0 18 16"><path d="M1 14V2.500A1.500 1.500 0 0 1 2.500 1h4l1.500 2.500h8a1.500 1.500 0 0 1 1.500 1.500V14a1.200 1.200 0 0 1-1.200 1.200H2.200A1.200 1.200 0 0 1 1 14Z" fill="none" stroke="#333" stroke-width="1.500"/></svg>
<div class="t" style="left:2266.8px;top:879.0px;line-height:30px;font-size:19.7px;color:#1f1f1f;">字符串运算</div>
<div class="t" style="left:2399.6px;top:879.0px;line-height:30px;font-size:19.7px;color:#1f1f1f;"><span class="l" style="font-size:20.59px;letter-spacing:-0.32px">V1.0</span></div>
<svg style="left:2458.5px;top:890.0px;" width="11" height="7" viewBox="0 0 11 7"><path d="M1 1l4.500 4.500L10 1" fill="none" stroke="#dadce0" stroke-width="1.500"/></svg>
<div style="left:2201px;top:915px;width:293px;height:37px;background:#f0f1f5;border-radius:7px;"></div>
<svg style="left:2213.7px;top:923.5px;" width="10" height="20" viewBox="0 0 10 20"><path d="M1 1l8 9-8 9" fill="none" stroke="#2a2a2a" stroke-width="1.700"/></svg>
<svg style="left:2237.5px;top:925.0px;" width="18" height="16" viewBox="0 0 18 16"><path d="M1 14V2.500A1.500 1.500 0 0 1 2.500 1h4l1.500 2.500h8a1.500 1.500 0 0 1 1.500 1.500V14a1.200 1.200 0 0 1-1.200 1.200H2.200A1.200 1.200 0 0 1 1 14Z" fill="none" stroke="#333" stroke-width="1.500"/></svg>
<div class="t" style="left:2266.8px;top:919.0px;line-height:30px;font-size:19.7px;color:#1f1f1f;">数据转换语句</div>
<div class="t" style="left:2399.6px;top:919.0px;line-height:30px;font-size:19.7px;color:#1f1f1f;"><span class="l" style="font-size:20.59px;letter-spacing:-0.32px">V1.0</span></div>
<svg style="left:2458.5px;top:930.0px;" width="11" height="7" viewBox="0 0 11 7"><path d="M1 1l4.500 4.500L10 1" fill="none" stroke="#dadce0" stroke-width="1.500"/></svg>
<div style="left:2201px;top:955px;width:293px;height:37px;background:#f0f1f5;border-radius:7px;"></div>
<svg style="left:2213.7px;top:963.5px;" width="10" height="20" viewBox="0 0 10 20"><path d="M1 1l8 9-8 9" fill="none" stroke="#2a2a2a" stroke-width="1.700"/></svg>
<svg style="left:2237.5px;top:965.0px;" width="18" height="16" viewBox="0 0 18 16"><path d="M1 14V2.500A1.500 1.500 0 0 1 2.500 1h4l1.500 2.500h8a1.500 1.500 0 0 1 1.500 1.500V14a1.200 1.200 0 0 1-1.200 1.200H2.200A1.200 1.200 0 0 1 1 14Z" fill="none" stroke="#333" stroke-width="1.500"/></svg>
<div class="t" style="left:2266.8px;top:959.0px;line-height:30px;font-size:19.7px;color:#1f1f1f;">数组及结构体<span class="l" style="font-size:20.59px;letter-spacing:-1.07px">...</span></div>
<div class="t" style="left:2404.6px;top:959.0px;line-height:30px;font-size:19.7px;color:#1f1f1f;"><span class="l" style="font-size:20.59px;letter-spacing:-0.32px">V1.0</span></div>
<svg style="left:2463.5px;top:970.0px;" width="11" height="7" viewBox="0 0 11 7"><path d="M1 1l4.500 4.500L10 1" fill="none" stroke="#dadce0" stroke-width="1.500"/></svg>
<div style="left:2201px;top:995px;width:293px;height:37px;background:#f0f1f5;border-radius:7px;"></div>
<svg style="left:2213.7px;top:1003.5px;" width="10" height="20" viewBox="0 0 10 20"><path d="M1 1l8 9-8 9" fill="none" stroke="#2a2a2a" stroke-width="1.700"/></svg>
<svg style="left:2237.5px;top:1005.0px;" width="18" height="16" viewBox="0 0 18 16"><path d="M1 14V2.500A1.500 1.500 0 0 1 2.500 1h4l1.500 2.500h8a1.500 1.500 0 0 1 1.500 1.500V14a1.200 1.200 0 0 1-1.200 1.200H2.200A1.200 1.200 0 0 1 1 14Z" fill="none" stroke="#333" stroke-width="1.500"/></svg>
<div class="t" style="left:2266.8px;top:999.0px;line-height:30px;font-size:19.7px;color:#1f1f1f;">标准验证功能</div>
<div class="t" style="left:2399.6px;top:999.0px;line-height:30px;font-size:19.7px;color:#1f1f1f;"><span class="l" style="font-size:20.59px;letter-spacing:-0.32px">V1.0</span></div>
<svg style="left:2458.5px;top:1010.0px;" width="11" height="7" viewBox="0 0 11 7"><path d="M1 1l4.500 4.500L10 1" fill="none" stroke="#dadce0" stroke-width="1.500"/></svg>
<div style="left:2199px;top:1432px;width:298px;height:3px;background:#b5cffb;"></div>
<div style="left:2199px;top:1438.7px;width:298px;height:34.799999999999955px;background:#e1ecfd;border-radius:5px;"></div>
<div class="t" style="left:2203px;top:1441.6px;line-height:30px;font-size:19.8px;color:#1f75fb;font-weight:700;">系统库高级指令</div>
<svg style="left:2470.0px;top:1450.1px;" width="18" height="10" viewBox="0 0 18 10"><path d="M1 1l8 8 8-8" fill="none" stroke="#1f75fb" stroke-width="1.600"/></svg>
<div style="left:2201px;top:1478px;width:293px;height:37px;background:#f0f1f5;border-radius:7px;"></div>
<svg style="left:2213.7px;top:1486.0px;" width="10" height="20" viewBox="0 0 10 20"><path d="M1 1l8 9-8 9" fill="none" stroke="#2a2a2a" stroke-width="1.700"/></svg>
<svg style="left:2237.5px;top:1487.5px;" width="18" height="16" viewBox="0 0 18 16"><path d="M1 14V2.500A1.500 1.500 0 0 1 2.500 1h4l1.500 2.500h8a1.500 1.500 0 0 1 1.500 1.500V14a1.200 1.200 0 0 1-1.200 1.200H2.200A1.200 1.200 0 0 1 1 14Z" fill="none" stroke="#333" stroke-width="1.500"/></svg>
<div class="t" style="left:2266.8px;top:1481.5px;line-height:30px;font-size:19.7px;color:#1f1f1f;">日期和时间<span class="l" style="font-size:20.59px;letter-spacing:-1.07px">...</span></div>
<div class="t" style="left:2401.6px;top:1481.5px;line-height:30px;font-size:19.7px;color:#1f1f1f;"><span class="l" style="font-size:20.59px;letter-spacing:-0.32px">V1.0</span></div>
<svg style="left:2460.5px;top:1492.5px;" width="11" height="7" viewBox="0 0 11 7"><path d="M1 1l4.500 4.500L10 1" fill="none" stroke="#dadce0" stroke-width="1.500"/></svg>
<div style="left:2201px;top:1518px;width:293px;height:37px;background:#f0f1f5;border-radius:7px;"></div>
<svg style="left:2213.7px;top:1526.3px;" width="10" height="20" viewBox="0 0 10 20"><path d="M1 1l8 9-8 9" fill="none" stroke="#2a2a2a" stroke-width="1.700"/></svg>
<svg style="left:2237.5px;top:1527.8px;" width="18" height="16" viewBox="0 0 18 16"><path d="M1 14V2.500A1.500 1.500 0 0 1 2.500 1h4l1.500 2.500h8a1.500 1.500 0 0 1 1.500 1.500V14a1.200 1.200 0 0 1-1.200 1.200H2.200A1.200 1.200 0 0 1 1 14Z" fill="none" stroke="#333" stroke-width="1.500"/></svg>
<div class="t" style="left:2266.8px;top:1521.8px;line-height:30px;font-size:19.7px;color:#1f1f1f;">系统与诊断<span class="l" style="font-size:20.59px;letter-spacing:-1.07px">...</span></div>
<div class="t" style="left:2401.6px;top:1521.8px;line-height:30px;font-size:19.7px;color:#1f1f1f;"><span class="l" style="font-size:20.59px;letter-spacing:-0.32px">V1.0</span></div>
<svg style="left:2460.5px;top:1532.8px;" width="11" height="7" viewBox="0 0 11 7"><path d="M1 1l4.500 4.500L10 1" fill="none" stroke="#dadce0" stroke-width="1.500"/></svg>
<div style="left:2201px;top:1558px;width:293px;height:37px;background:#f0f1f5;border-radius:7px;"></div>
<svg style="left:2213.7px;top:1566.3px;" width="10" height="20" viewBox="0 0 10 20"><path d="M1 1l8 9-8 9" fill="none" stroke="#2a2a2a" stroke-width="1.700"/></svg>
<svg style="left:2237.5px;top:1567.8px;" width="18" height="16" viewBox="0 0 18 16"><path d="M1 14V2.500A1.500 1.500 0 0 1 2.500 1h4l1.500 2.500h8a1.500 1.500 0 0 1 1.500 1.500V14a1.200 1.200 0 0 1-1.200 1.200H2.200A1.200 1.200 0 0 1 1 14Z" fill="none" stroke="#333" stroke-width="1.500"/></svg>
<div class="t" style="left:2266.8px;top:1561.8px;line-height:30px;font-size:19.7px;color:#1f1f1f;">通讯函数</div>
<div class="t" style="left:2399.6px;top:1561.8px;line-height:30px;font-size:19.7px;color:#1f1f1f;"><span class="l" style="font-size:20.59px;letter-spacing:-0.32px">V1.0</span></div>
<svg style="left:2458.5px;top:1572.8px;" width="11" height="7" viewBox="0 0 11 7"><path d="M1 1l4.500 4.500L10 1" fill="none" stroke="#dadce0" stroke-width="1.500"/></svg>
<div style="left:2199px;top:1656px;width:298px;height:3px;background:#b5cffb;"></div>
<div style="left:2199px;top:1662px;width:298px;height:35px;background:#e1ecfd;border-radius:5px;"></div>
<div class="t" style="left:2203px;top:1665.0px;line-height:30px;font-size:19.8px;color:#1f75fb;font-weight:700;">系统库工艺指令</div>
<svg style="left:2470.0px;top:1673.5px;" width="18" height="10" viewBox="0 0 18 10"><path d="M1 1l8 8 8-8" fill="none" stroke="#1f75fb" stroke-width="1.600"/></svg>
<div style="left:2201px;top:1701px;width:293px;height:37px;background:#f0f1f5;border-radius:7px;"></div>
<svg style="left:2213.7px;top:1709.6px;" width="10" height="20" viewBox="0 0 10 20"><path d="M1 1l8 9-8 9" fill="none" stroke="#2a2a2a" stroke-width="1.700"/></svg>
<svg style="left:2237.5px;top:1711.1px;" width="18" height="16" viewBox="0 0 18 16"><path d="M1 14V2.500A1.500 1.500 0 0 1 2.500 1h4l1.500 2.500h8a1.500 1.500 0 0 1 1.500 1.500V14a1.200 1.200 0 0 1-1.200 1.200H2.200A1.200 1.200 0 0 1 1 14Z" fill="none" stroke="#333" stroke-width="1.500"/></svg>
<div class="t" style="left:2266.8px;top:1705.1px;line-height:30px;font-size:19.7px;color:#1f1f1f;">运动控制函数</div>
<div class="t" style="left:2399.6px;top:1705.1px;line-height:30px;font-size:19.7px;color:#1f1f1f;"><span class="l" style="font-size:20.59px;letter-spacing:-0.32px">V1.0</span></div>
<svg style="left:2458.5px;top:1716.1px;" width="11" height="7" viewBox="0 0 11 7"><path d="M1 1l4.500 4.500L10 1" fill="none" stroke="#dadce0" stroke-width="1.500"/></svg>
<div style="left:2201px;top:1741px;width:293px;height:37px;background:#f0f1f5;border-radius:7px;"></div>
<svg style="left:2213.7px;top:1749.3px;" width="10" height="20" viewBox="0 0 10 20"><path d="M1 1l8 9-8 9" fill="none" stroke="#2a2a2a" stroke-width="1.700"/></svg>
<svg style="left:2237.5px;top:1750.8px;" width="18" height="16" viewBox="0 0 18 16"><path d="M1 14V2.500A1.500 1.500 0 0 1 2.500 1h4l1.500 2.500h8a1.500 1.500 0 0 1 1.500 1.500V14a1.200 1.200 0 0 1-1.200 1.200H2.200A1.200 1.200 0 0 1 1 14Z" fill="none" stroke="#333" stroke-width="1.500"/></svg>
<div class="t" style="left:2266.8px;top:1744.8px;line-height:30px;font-size:19.7px;color:#1f1f1f;">单轴函数</div>
<div class="t" style="left:2399.6px;top:1744.8px;line-height:30px;font-size:19.7px;color:#1f1f1f;"><span class="l" style="font-size:20.59px;letter-spacing:-0.32px">V1.0</span></div>
<svg style="left:2458.5px;top:1755.8px;" width="11" height="7" viewBox="0 0 11 7"><path d="M1 1l4.500 4.500L10 1" fill="none" stroke="#dadce0" stroke-width="1.500"/></svg>
<div style="left:2199px;top:1782px;width:298px;height:3px;background:#b5cffb;"></div>
<div style="left:2199px;top:1785.7px;width:298px;height:34.799999999999955px;background:#e1ecfd;border-radius:5px;"></div>
<div class="t" style="left:2203px;top:1788.6px;line-height:30px;font-size:19.8px;color:#1f75fb;font-weight:700;">用户库</div>
<svg style="left:2470.0px;top:1797.1px;" width="18" height="10" viewBox="0 0 18 10"><path d="M1 1l8 8 8-8" fill="none" stroke="#1f75fb" stroke-width="1.600"/></svg>
<div class="t" style="left:2246px;top:1821.5px;line-height:30px;font-size:19.9px;color:#333;font-weight:700;">无符合条件函数</div>
<div class="t" style="left:25.3px;top:1912.3px;line-height:30px;font-size:19.9px;color:#fff;">语言服务空闲</div>
<svg style="left:165.5px;top:1913.3px;" width="21" height="21" viewBox="0 0 21 21"><g fill="none" stroke="#fff" stroke-width="1.800"><circle cx="10.500" cy="10.500" r="9.300"/><path d="M6.800 6.800l7.400 7.400M14.200 6.800l-7.400 7.400"/></g></svg>
<div class="t" style="left:192.5px;top:1912.3px;line-height:30px;font-size:19.7px;color:#fff;"><span class="l" style="font-size:19.20px;letter-spacing:0.10px">0</span></div>
<svg style="left:210.6px;top:1913.5px;" width="20" height="18" viewBox="0 0 20 18"><path d="M10 1.500L19 17H1Z" fill="none" stroke="#fff" stroke-width="1.800" stroke-linejoin="round"/><path d="M10 7v5.500M10 14v1.500" stroke="#fff" stroke-width="1.800"/></svg>
<div class="t" style="left:237px;top:1912.3px;line-height:30px;font-size:19.7px;color:#fff;"><span class="l" style="font-size:19.20px;letter-spacing:0.10px">0</span></div>
<div class="t" style="left:268.4px;top:1912.0px;line-height:30px;font-size:19.7px;color:#fff;"><span class="l" style="font-size:19.20px;letter-spacing:0.30px">ClientID-5e832a23-7b8e-4a04-a88e-d9235d1c05b9</span></div>
<svg style="left:2283.5px;top:1911.0px;" width="20" height="24" viewBox="0 0 20 24"><path d="M10 2a7 7 0 0 0-7 7v5l-2 4h18l-2-4V9" fill="none" stroke="#fff" stroke-width="1.900" stroke-linejoin="round"/><path d="M7.500 21a2.500 2.500 0 0 0 5 0" fill="#fff"/><circle cx="15" cy="5" r="4.300" fill="#fff"/></svg>
<div class="t" style="left:2309.5px;top:1912.0px;line-height:30px;font-size:19.7px;color:#fff;"><span class="l" style="font-size:19.20px;letter-spacing:0.10px">4</span></div>
<svg style="left:2342.0px;top:1915.0px;" width="21" height="17" viewBox="0 0 21 17"><rect x="1" y="1" width="19" height="15" fill="none" stroke="#fff" stroke-width="1.700"/><path d="M1 5.500h19" stroke="#fff" stroke-width="1.700"/></svg>
<svg style="left:2383.0px;top:1906.5px;" width="27" height="28" viewBox="0 0 27 28"><g fill="none" stroke="#fff" stroke-width="1.400"><path d="M10 9V1h16v17h-6"/><path d="M16 4v5M19 4v5"/><rect x="21.500" y="4" width="2" height="5"/><path d="M17 12h6.500M19 15h4.500"/><rect x="1" y="10" width="17" height="12" rx="1"/><path d="M5 16l3 3 6-6M9.500 22v4M4 27h11"/></g></svg>
<div class="t" style="left:2427px;top:1908.5px;line-height:30px;font-size:18.1px;color:#fff;">在线设备</div>
<div class="t" style="left:2517.5px;top:1911.5px;line-height:30px;font-size:19.7px;color:#fff;font-weight:700;"><span class="l" style="font-size:25.92px;letter-spacing:0.72px">0</span></div>
<div style="left:2384px;top:1936px;width:148px;height:2px;background:#fff;"></div>
<div style="left:375px;top:630px;width:1803px;height:1266px;border:5.5px solid #fb1a0e;border-radius:6px;"></div>
</body></html>
